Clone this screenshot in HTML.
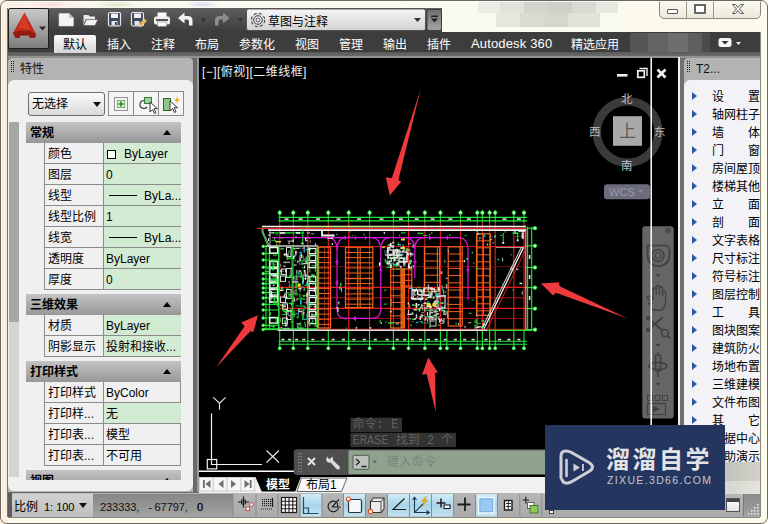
<!DOCTYPE html><html><head><meta charset="utf-8"><title>AutoCAD</title><style>
*{margin:0;padding:0;box-sizing:border-box}
html,body{width:768px;height:524px;overflow:hidden}
body{position:relative;background:#fbfbe8;font-family:"Liberation Sans","Noto Sans CJK SC",sans-serif;font-size:12px;color:#000;line-height:1}
.a{position:absolute}
.t{position:absolute;white-space:nowrap;line-height:14px;height:14px}
#qat{left:48px;top:8px;width:394px;height:25px;background:linear-gradient(#5e5e5e,#3a3a3a)}
#tabs{left:8px;top:32px;width:752px;height:21px;background:#3d3d3d}
#tabs .t{color:#fff;top:4px;font-size:12px}
#strip{left:8px;top:52px;width:752px;height:6px;background:linear-gradient(#5a5a5a 0,#6a6a6a 66%,#929292 67%,#929292 100%)}
#appbtn{left:8px;top:8px;width:41px;height:41px;background:linear-gradient(#c9c9c9,#7d7d7d);border:1px solid #1c1c1c;border-radius:2px}
#main{left:8px;top:58px;width:752px;height:435px;background:#6a6a6a}
#lp{left:8px;top:58px;width:185px;height:434px;background:#b3b3b3;border-radius:4px 4px 0 0}
#lpc{left:8px;top:80px;width:185px;height:411px;background:#f0f0f0;border-radius:6px;overflow:hidden}
#rp{left:684px;top:58px;width:76px;height:434px;background:#b3b3b3;border-radius:4px 0 0 0}
#rpc{left:684px;top:80px;width:76px;height:412px;background:#f3f3f7;border-radius:6px 0 0 6px;overflow:hidden}
#draw{left:199px;top:58px;width:480px;height:419px;background:#000;overflow:hidden}
.gh{position:absolute;left:18px;width:155px;height:21px;background:linear-gradient(#c4c4c4,#979797);font-weight:bold}
.gh .t{left:4px;top:4px}
.gh i{position:absolute;right:10px;top:8px;width:0;height:0;border-left:4px solid transparent;border-right:4px solid transparent;border-bottom:5px solid #000}
.row{position:absolute;left:36px;width:137px;height:21px;border-bottom:1px solid #8c8c8c;border-left:1px solid #8c8c8c;border-right:1px solid #8c8c8c;background:#f0f0f0}
.row .n{position:absolute;left:3px;top:4px;line-height:14px;white-space:nowrap}
.row .v{position:absolute;left:58px;top:0;width:78px;height:20px;border-left:1px solid #8c8c8c;padding:4px 0 0 2px;line-height:14px;white-space:nowrap;overflow:hidden}
.g .v{background:#d3ead3}
.ri{position:absolute;left:28px;white-space:nowrap;line-height:14px;font-size:12px}
.tri{position:absolute;left:8px;width:0;height:0;border-top:4.500px solid transparent;border-bottom:4.500px solid transparent;border-left:5.500px solid #2b5a9c}
#status{left:8px;top:493px;width:752px;height:24px;background:linear-gradient(#b6b6b6,#aaaaaa)}
</style></head><body>
<div class="a" style="left:0;top:0;width:768px;height:33px;background:linear-gradient(90deg,#fcefe2 0,#fdf0ea 6%,#f9faee 15%,#fcfbf3 30%,#fbfaf0 60%,#fbfaec 100%)"></div>
<div class="a" style="left:0;top:8px;width:8px;height:516px;background:#fdeedd"></div>
<div class="a" style="left:30px;top:1px;width:40px;height:7px;background:radial-gradient(closest-side,#f9dcd8,rgba(253,240,234,0))"></div>
<div class="a" style="left:95px;top:1px;width:44px;height:7px;background:radial-gradient(closest-side,#dbe6c8,rgba(250,250,240,0))"></div>
<div class="a" style="left:185px;top:1px;width:36px;height:7px;background:radial-gradient(closest-side,#d4dcf0,rgba(250,250,240,0))"></div>
<div class="a" style="left:478px;top:0px;width:22px;height:13px;background:#ecece4"></div>
<div class="a" style="left:500px;top:0px;width:24px;height:13px;background:#e2e2da"></div>
<div class="a" style="left:524px;top:0px;width:24px;height:13px;background:#d4d4cc"></div>
<div class="a" style="left:548px;top:0px;width:24px;height:13px;background:#d0d0c8"></div>
<div class="a" style="left:572px;top:0px;width:24px;height:13px;background:#dadad2"></div>
<div class="a" style="left:596px;top:0px;width:22px;height:13px;background:#e8e8e0"></div>
<div class="a" style="left:496px;top:13px;width:24px;height:14px;background:#e6e6de"></div>
<div class="a" style="left:520px;top:13px;width:24px;height:14px;background:#dadad2"></div>
<div class="a" style="left:544px;top:13px;width:24px;height:14px;background:#d6d6ce"></div>
<div class="a" style="left:568px;top:13px;width:32px;height:14px;background:#e2e2da"></div>
<div class="a" style="left:659px;top:-2px;width:102px;height:21px;border:1px solid #8a877c;border-radius:0 0 5px 5px;background:linear-gradient(#fdfcf4,#ece9da)"></div>
<div class="a" style="left:686px;top:0;width:1px;height:18px;background:#9a978c"></div>
<div class="a" style="left:713px;top:0;width:1px;height:18px;background:#9a978c"></div>
<div class="a" style="left:667px;top:9px;width:11px;height:5px;border:1px solid #555;border-radius:1px;background:#fff"></div>
<div class="a" style="left:694px;top:4px;width:12px;height:10px;border:2px solid #666;border-radius:1px;background:#fff"></div>
<svg class="a" style="left:731px;top:3px" width="14" height="12" viewBox="0 0 14 12"><path d="M1.5 1.5h3l2.5 3 2.5-3h3l-4 4.5 4 4.500h-3l-2.5-3-2.5 3h-3l4-4.500z" fill="#fff" stroke="#555" stroke-width="1"/></svg>
<div class="a" id="qat"></div>
<div class="a" id="tabs"></div>
<div class="a" id="strip"></div>
<div class="a" id="appbtn"></div>
<svg class="a" style="left:10px;top:10px" width="38" height="38" viewBox="0 0 38 38"><path d="M14.500 2.500 L3 23 L5.500 28 L9.500 28 L10 25.500 L19 25.500 L20 28 L25 28 L26 24 Z" fill="#c2281c"/><path d="M14.500 2.500 L8 18 L20 20 Z" fill="#e0402c" opacity=".7"/><path d="M3 23 L5.500 28 L9.500 28 L10 25.500 L19 25.500 L20 28 L25 28 L26 24 L20 21 L8 21 Z" fill="#7d120c" opacity=".65"/><path d="M29 16.500h7l-3.500 4z" fill="#2a2a2a"/></svg>
<svg class="a" style="left:48px;top:8px" width="394" height="25" viewBox="48 8 394 25"><path d="M59 13.500h10l4.500 4.500v8h-14.500z" fill="#f4f4f4" stroke="#d8d8d8" stroke-width=".6"/><path d="M69 13.500v4.500h4.500z" fill="#bdbdbd"/><path d="M83.500 15h5l1.500 1.500h5v3h-9.500l-2 5.500z" fill="#e8e8e8"/><path d="M86.500 19.500h11.500l-3 6h-11.500z" fill="#f2f2f2" stroke="#555" stroke-width=".6"/><rect x="108.500" y="12.500" width="12" height="13.500" rx="1.500" fill="#3e4858" stroke="#e4e8ee" stroke-width="1.200"/><rect x="111" y="13.500" width="7" height="4.500" fill="#eef2f6"/><rect x="111.500" y="21" width="6" height="4.500" fill="#dfe6ee"/><rect x="115" y="22" width="1.800" height="3" fill="#445"/><rect x="131.500" y="12.500" width="12" height="13.500" rx="1.500" fill="#3e4858" stroke="#e4e8ee" stroke-width="1.200"/><rect x="134" y="13.500" width="7" height="4.500" fill="#eef2f6"/><rect x="134.500" y="21" width="5" height="4.500" fill="#dfe6ee"/><path d="M139 26.500l1-3 4.500-4.500 2 2-4.500 4.500z" fill="#f0b030" stroke="#fff" stroke-width=".5"/><rect x="157.500" y="12.500" width="9" height="5" fill="#fafafa"/><rect x="154" y="16.500" width="16" height="8" rx="2" fill="#f0f0f0"/><rect x="156" y="19" width="12" height="2" fill="#555"/><rect x="157.500" y="22" width="9" height="4.500" fill="#fafafa" stroke="#777" stroke-width=".5"/><path d="M178 18l6.500-5.500v3.500h3.500q4.500 0 4.500 4.500v5h-3.500v-4q0-2-2-2h-2.500v4z" fill="#f2f2f2"/><path d="M201 18.500h5l-2.500 3z" fill="#2a2a2a"/><path d="M229.500 18l-6.500-5.500v3.500h-3.500q-4.500 0-4.500 4.500v5h3.500v-4q0-2 2-2h2.500v4z" fill="#8c8c8c"/><path d="M238 18.500h5l-2.500 3z" fill="#2a2a2a"/><defs><linearGradient id="wsg" x1="0" y1="0" x2="0" y2="1"><stop offset="0" stop-color="#f6f6f6"/><stop offset="1" stop-color="#d2d2d2"/></linearGradient><linearGradient id="wsg2" x1="0" y1="0" x2="0" y2="1"><stop offset="0" stop-color="#6e6e6e"/><stop offset="1" stop-color="#a4a4a4"/></linearGradient></defs><rect x="246.500" y="9" width="179" height="21.500" rx="2" fill="url(#wsg)" stroke="#444" stroke-width=".8"/><circle cx="258" cy="20" r="5.600" fill="none" stroke="#4a4a4a" stroke-width="3.400" stroke-dasharray="2.500 1.900"/><circle cx="258" cy="20" r="5.300" fill="none" stroke="#f4f4f4" stroke-width="1.600" stroke-dasharray="2.100 2.060" stroke-dashoffset="-.2"/><circle cx="258" cy="20" r="4.200" fill="#f0f0f0" stroke="#4a4a4a" stroke-width="1"/><circle cx="258" cy="20" r="2" fill="#e8e8e8" stroke="#4a4a4a" stroke-width=".9"/><path d="M414 18h7l-3.500 4z" fill="#333"/><rect x="427" y="9.500" width="14.500" height="21" rx="2" fill="url(#wsg2)" stroke="#333" stroke-width=".8"/><rect x="431" y="15.500" width="7" height="1.500" fill="#222"/><path d="M431 18.500h7l-3.500 4z" fill="#222"/></svg>
<div class="t" style="left:268px;top:14.500px;font-size:12px">草图与注释</div>
<div class="a" style="left:54px;top:35px;width:42px;height:18px;background:linear-gradient(#fafafa,#d6d6d6);border-radius:2px 2px 0 0"></div>
<div class="t" style="left:63px;top:37.500px;color:#000">默认</div>
<div class="t" style="left:107px;top:37.500px;color:#fff">插入</div>
<div class="t" style="left:151px;top:37.500px;color:#fff">注释</div>
<div class="t" style="left:195px;top:37.500px;color:#fff">布局</div>
<div class="t" style="left:239px;top:37.500px;color:#fff">参数化</div>
<div class="t" style="left:295px;top:37.500px;color:#fff">视图</div>
<div class="t" style="left:339px;top:37.500px;color:#fff">管理</div>
<div class="t" style="left:383px;top:37.500px;color:#fff">输出</div>
<div class="t" style="left:427px;top:37.500px;color:#fff">插件</div>
<div class="t" style="left:571px;top:37.500px;color:#fff">精选应用</div>
<div class="t" style="left:471px;top:37px;color:#fff;font-size:13px;letter-spacing:.15px">Autodesk 360</div>
<div class="a" style="left:630px;top:33px;width:18px;height:19px;background:#555"></div>
<div class="a" style="left:648px;top:33px;width:20px;height:19px;background:#636363"></div>
<div class="a" style="left:668px;top:33px;width:20px;height:19px;background:#6e6e6e"></div>
<div class="a" style="left:688px;top:33px;width:14px;height:19px;background:#5e5e5e"></div>
<div class="a" style="left:702px;top:33px;width:8px;height:19px;background:#4c4c4c"></div>
<svg class="a" style="left:716px;top:36px" width="30" height="14" viewBox="0 0 30 14"><rect x="2.500" y="2" width="13" height="9" rx="2.500" fill="#f4f4f4"/><path d="M5.500 5h7l-3.500 3.500z" fill="#333"/><path d="M20 6h5l-2.500 3z" fill="#eee"/></svg>
<div class="a" id="main"></div>
<div class="a" id="lp"></div>
<svg class="a" style="left:10px;top:61px" width="6" height="12" viewBox="0 0 6 12"><rect x="1" y="0" width="1" height="1" fill="#222"/><rect x="1" y="2" width="1" height="1" fill="#222"/><rect x="1" y="4" width="1" height="1" fill="#222"/><rect x="1" y="6" width="1" height="1" fill="#222"/><rect x="1" y="8" width="1" height="1" fill="#222"/><rect x="1" y="10" width="1" height="1" fill="#222"/><rect x="3" y="0" width="1" height="1" fill="#222"/><rect x="3" y="2" width="1" height="1" fill="#222"/><rect x="3" y="4" width="1" height="1" fill="#222"/><rect x="3" y="6" width="1" height="1" fill="#222"/><rect x="3" y="8" width="1" height="1" fill="#222"/><rect x="3" y="10" width="1" height="1" fill="#222"/></svg>
<div class="t" style="left:20px;top:62px;color:#111">特性</div>
<div class="a" id="lpc">
<div class="a" style="left:1px;top:42px;width:9.500px;height:355px;background:#d4d4d4"></div>
<div class="a" style="left:1px;top:42px;width:9.500px;height:200px;background:#a6a6a6"></div>
<div class="a" style="left:20px;top:12px;width:77px;height:24px;border:1px solid #6e6e6e;border-radius:3px;background:linear-gradient(#fbfbfb,#d9d9d9)"></div>
<div class="t" style="left:24px;top:17px">无选择</div>
<div class="a" style="left:85px;top:22px;width:0;height:0;border-left:4px solid transparent;border-right:4px solid transparent;border-top:5px solid #111"></div>
<div class="a" style="left:100px;top:11px;width:76px;height:25px;border:1px solid #8a8a8a;background:#f4f4f4"></div>
<div class="a" style="left:125px;top:12px;width:1px;height:23px;background:#8a8a8a"></div>
<div class="a" style="left:150px;top:12px;width:1px;height:23px;background:#8a8a8a"></div>
<svg class="a" style="left:100px;top:11px" width="76" height="25" viewBox="0 0 76 25"><rect x="6.500" y="6.500" width="13" height="13" fill="none" stroke="#333" stroke-width="1" stroke-dasharray="1 1"/><rect x="9.500" y="9.500" width="7" height="7" fill="#d8f0d0" stroke="#7a7"/><path d="M13 10.500v5M10.500 13h5" stroke="#1a8a1a" stroke-width="1.600"/><path d="M36 9.500a4 4 0 1 0 3 6.500" fill="none" stroke="#333" stroke-width="1.200"/><rect x="36.500" y="6.500" width="7" height="6" fill="#9ccf9c" stroke="#3a7a3a"/><path d="M42 11v10l2.500-2.500 2 4 1.500-.8-2-4h3.500z" fill="#fff" stroke="#222" stroke-width=".9"/><rect x="55.500" y="7.500" width="7" height="12" fill="#8cc68c" stroke="#2a6a2a"/><path d="M62 10v10l2.500-2.500 2 4 1.500-.8-2-4h3.500z" fill="#fff" stroke="#222" stroke-width=".9"/><path d="M70 5l-3.500 5h2.500l-2 4 5-6h-2.500z" fill="#f2b020"/></svg>
<div class="gh" style="top:42px"><div class="t">常规</div><i></i></div>
<div class="row g" style="top:63px"><div class="n">颜色</div><div class="v"><span style="display:inline-block;width:9px;height:9px;border:1px solid #000;background:#fff;vertical-align:-1px;margin:0 8px 0 1px"></span>ByLayer</div></div>
<div class="row g" style="top:84px"><div class="n">图层</div><div class="v">0</div></div>
<div class="row g" style="top:105px"><div class="n">线型</div><div class="v"><span style="display:inline-block;width:28px;height:1px;background:#000;vertical-align:4px;margin:0 7px 0 3px"></span>ByLa...</div></div>
<div class="row g" style="top:126px"><div class="n">线型比例</div><div class="v">1</div></div>
<div class="row g" style="top:147px"><div class="n">线宽</div><div class="v"><span style="display:inline-block;width:28px;height:1px;background:#000;vertical-align:4px;margin:0 7px 0 3px"></span>ByLa...</div></div>
<div class="row g" style="top:168px"><div class="n">透明度</div><div class="v">ByLayer</div></div>
<div class="row g" style="top:189px"><div class="n">厚度</div><div class="v">0</div></div>
<div class="gh" style="top:214px"><div class="t">三维效果</div><i></i></div>
<div class="row g" style="top:235px"><div class="n">材质</div><div class="v">ByLayer</div></div>
<div class="row g" style="top:256px"><div class="n">阴影显示</div><div class="v">投射和接收...</div></div>
<div class="gh" style="top:281px"><div class="t">打印样式</div><i></i></div>
<div class="row" style="top:302px"><div class="n">打印样式</div><div class="v">ByColor</div></div>
<div class="row g" style="top:323px"><div class="n">打印样...</div><div class="v">无</div></div>
<div class="row" style="top:344px"><div class="n">打印表...</div><div class="v">模型</div></div>
<div class="row" style="top:365px"><div class="n">打印表...</div><div class="v">不可用</div></div>
<div class="a" style="left:18px;top:390px;width:155px;height:10px;overflow:hidden"><div class="gh" style="left:0;top:0"><div class="t">视图</div><i></i></div></div>
</div>
<div class="a" id="rp"></div>
<svg class="a" style="left:686px;top:61px" width="6" height="12" viewBox="0 0 6 12"><rect x="1" y="0" width="1" height="1" fill="#222"/><rect x="1" y="2" width="1" height="1" fill="#222"/><rect x="1" y="4" width="1" height="1" fill="#222"/><rect x="1" y="6" width="1" height="1" fill="#222"/><rect x="1" y="8" width="1" height="1" fill="#222"/><rect x="1" y="10" width="1" height="1" fill="#222"/><rect x="3" y="0" width="1" height="1" fill="#222"/><rect x="3" y="2" width="1" height="1" fill="#222"/><rect x="3" y="4" width="1" height="1" fill="#222"/><rect x="3" y="6" width="1" height="1" fill="#222"/><rect x="3" y="8" width="1" height="1" fill="#222"/><rect x="3" y="10" width="1" height="1" fill="#222"/></svg>
<div class="t" style="left:696px;top:62px;color:#111">T2...</div>
<div class="a" id="rpc">
<div class="tri" style="top:12px"></div><div class="ri" style="top:10px">设　　置</div>
<div class="tri" style="top:30px"></div><div class="ri" style="top:28px">轴网柱子</div>
<div class="tri" style="top:48px"></div><div class="ri" style="top:46px">墙　　体</div>
<div class="tri" style="top:66px"></div><div class="ri" style="top:64px">门　　窗</div>
<div class="tri" style="top:84px"></div><div class="ri" style="top:82px">房间屋顶</div>
<div class="tri" style="top:102px"></div><div class="ri" style="top:100px">楼梯其他</div>
<div class="tri" style="top:120px"></div><div class="ri" style="top:118px">立　　面</div>
<div class="tri" style="top:138px"></div><div class="ri" style="top:136px">剖　　面</div>
<div class="tri" style="top:156px"></div><div class="ri" style="top:154px">文字表格</div>
<div class="tri" style="top:174px"></div><div class="ri" style="top:172px">尺寸标注</div>
<div class="tri" style="top:192px"></div><div class="ri" style="top:190px">符号标注</div>
<div class="tri" style="top:210px"></div><div class="ri" style="top:208px">图层控制</div>
<div class="tri" style="top:228px"></div><div class="ri" style="top:226px">工　　具</div>
<div class="tri" style="top:246px"></div><div class="ri" style="top:244px">图块图案</div>
<div class="tri" style="top:264px"></div><div class="ri" style="top:262px">建筑防火</div>
<div class="tri" style="top:282px"></div><div class="ri" style="top:280px">场地布置</div>
<div class="tri" style="top:300px"></div><div class="ri" style="top:298px">三维建模</div>
<div class="tri" style="top:318px"></div><div class="ri" style="top:316px">文件布图</div>
<div class="tri" style="top:336px"></div><div class="ri" style="top:334px">其　　它</div>
<div class="tri" style="top:354px"></div><div class="ri" style="top:352px">数据中心</div>
<div class="tri" style="top:372px"></div><div class="ri" style="top:370px">帮助演示</div>
</div>
<div class="a" id="status"></div>
<div class="a" style="left:8px;top:493px;width:4px;height:24px;background:#5c5c5c"></div>
<div class="a" style="left:12px;top:494px;width:81px;height:22.500px;background:linear-gradient(#d2d2d2,#bdbdbd)"></div>
<div class="t" style="left:14px;top:499.500px">比例</div>
<div class="a" style="left:93px;top:494px;width:140px;height:23px;background:linear-gradient(#868686,#a4a4a4)"></div>
<div class="t" style="left:44px;top:500px;font-size:11px;letter-spacing:-.06px">1<span style="letter-spacing:3px">:</span>100</div>
<div class="a" style="left:79px;top:503px;width:0;height:0;border-left:4px solid transparent;border-right:4px solid transparent;border-top:5px solid #111"></div>
<div class="t" style="left:100px;top:500px;font-size:11px;letter-spacing:-.06px;color:#111">233333<span style="letter-spacing:3px">, </span><span style="letter-spacing:2.400px">-</span>67797<span style="letter-spacing:3px">, </span>0</div>
<div class="a" style="left:197px;top:58px;width:2px;height:434px;background:#9a9a9a"></div>
<div class="a" id="draw"></div>
<div class="a" style="left:678px;top:57px;width:2px;height:421px;background:#f2f2f2"></div>
<div class="a" style="left:680px;top:58px;width:4px;height:434px;background:#707070"></div>
<svg class="a" style="left:199px;top:58px" width="480" height="419" viewBox="199 58 480 419" fill="none"><path d="M279.7 210L279.7 222.5" stroke="#22e83a" stroke-width="1.1"/><circle cx="279.7" cy="212.7" r="1.7" fill="#d8ffd8" stroke="#22e83a" stroke-width="1"/><path d="M293.3 210L293.3 222.5" stroke="#22e83a" stroke-width="1.1"/><circle cx="293.3" cy="212.7" r="1.7" fill="#d8ffd8" stroke="#22e83a" stroke-width="1"/><path d="M307.8 210L307.8 222.5" stroke="#22e83a" stroke-width="1.1"/><circle cx="307.8" cy="212.7" r="1.7" fill="#d8ffd8" stroke="#22e83a" stroke-width="1"/><path d="M328.3 210L328.3 222.5" stroke="#22e83a" stroke-width="1.1"/><circle cx="328.3" cy="212.7" r="1.7" fill="#d8ffd8" stroke="#22e83a" stroke-width="1"/><path d="M348.7 210L348.7 222.5" stroke="#22e83a" stroke-width="1.1"/><circle cx="348.7" cy="212.7" r="1.7" fill="#d8ffd8" stroke="#22e83a" stroke-width="1"/><path d="M369.6 210L369.6 222.5" stroke="#22e83a" stroke-width="1.1"/><circle cx="369.6" cy="212.7" r="1.7" fill="#d8ffd8" stroke="#22e83a" stroke-width="1"/><path d="M393.4 210L393.4 222.5" stroke="#22e83a" stroke-width="1.1"/><circle cx="393.4" cy="212.7" r="1.7" fill="#d8ffd8" stroke="#22e83a" stroke-width="1"/><path d="M408.5 210L408.5 222.5" stroke="#22e83a" stroke-width="1.1"/><circle cx="408.5" cy="212.7" r="1.7" fill="#d8ffd8" stroke="#22e83a" stroke-width="1"/><path d="M424.9 210L424.9 222.5" stroke="#22e83a" stroke-width="1.1"/><circle cx="424.9" cy="212.7" r="1.7" fill="#d8ffd8" stroke="#22e83a" stroke-width="1"/><path d="M440.4 210L440.4 222.5" stroke="#22e83a" stroke-width="1.1"/><circle cx="440.4" cy="212.7" r="1.7" fill="#d8ffd8" stroke="#22e83a" stroke-width="1"/><path d="M460.5 210L460.5 222.5" stroke="#22e83a" stroke-width="1.1"/><circle cx="460.5" cy="212.7" r="1.7" fill="#d8ffd8" stroke="#22e83a" stroke-width="1"/><path d="M477.3 210L477.3 222.5" stroke="#22e83a" stroke-width="1.1"/><circle cx="477.3" cy="212.7" r="1.7" fill="#d8ffd8" stroke="#22e83a" stroke-width="1"/><path d="M482.4 210L482.4 222.5" stroke="#22e83a" stroke-width="1.1"/><circle cx="482.4" cy="212.7" r="1.7" fill="#d8ffd8" stroke="#22e83a" stroke-width="1"/><path d="M489.6 210L489.6 222.5" stroke="#22e83a" stroke-width="1.1"/><circle cx="489.6" cy="212.7" r="1.7" fill="#d8ffd8" stroke="#22e83a" stroke-width="1"/><path d="M495.2 210L495.2 222.5" stroke="#22e83a" stroke-width="1.1"/><circle cx="495.2" cy="212.7" r="1.7" fill="#d8ffd8" stroke="#22e83a" stroke-width="1"/><path d="M513.8 210L513.8 222.5" stroke="#22e83a" stroke-width="1.1"/><circle cx="513.8" cy="212.7" r="1.7" fill="#d8ffd8" stroke="#22e83a" stroke-width="1"/><path d="M524 210L524 222.5" stroke="#22e83a" stroke-width="1.1"/><circle cx="524" cy="212.7" r="1.7" fill="#d8ffd8" stroke="#22e83a" stroke-width="1"/><path d="M278.5 217.4L527 217.4" stroke="#22e83a" stroke-width="1.1"/><path d="M278.5 220.9L527 220.9" stroke="#22e83a" stroke-width="1.1"/><rect x="284.5" y="218.3" width="4" height="1.6" fill="#f4f4f4" opacity="0.9"/><rect x="298.6" y="218.3" width="4" height="1.6" fill="#f4f4f4" opacity="0.9"/><rect x="316.1" y="218.3" width="4" height="1.6" fill="#f4f4f4" opacity="0.9"/><rect x="336.5" y="218.3" width="4" height="1.6" fill="#f4f4f4" opacity="0.9"/><rect x="357.1" y="218.3" width="4" height="1.6" fill="#f4f4f4" opacity="0.9"/><rect x="379.5" y="218.3" width="4" height="1.6" fill="#f4f4f4" opacity="0.9"/><rect x="398.9" y="218.3" width="4" height="1.6" fill="#f4f4f4" opacity="0.9"/><rect x="414.7" y="218.3" width="4" height="1.6" fill="#f4f4f4" opacity="0.9"/><rect x="430.6" y="218.3" width="4" height="1.6" fill="#f4f4f4" opacity="0.9"/><rect x="448.4" y="218.3" width="4" height="1.6" fill="#f4f4f4" opacity="0.9"/><rect x="466.9" y="218.3" width="4" height="1.6" fill="#f4f4f4" opacity="0.9"/><rect x="502.5" y="218.3" width="4" height="1.6" fill="#f4f4f4" opacity="0.9"/><rect x="516.9" y="218.3" width="4" height="1.6" fill="#f4f4f4" opacity="0.9"/><path d="M279.7 331L279.7 349.5" stroke="#22e83a" stroke-width="1.1"/><path d="M293.3 331L293.3 349.5" stroke="#22e83a" stroke-width="1.1"/><path d="M307.8 331L307.8 349.5" stroke="#22e83a" stroke-width="1.1"/><path d="M328.3 331L328.3 349.5" stroke="#22e83a" stroke-width="1.1"/><path d="M348.7 331L348.7 349.5" stroke="#22e83a" stroke-width="1.1"/><path d="M369.6 331L369.6 349.5" stroke="#22e83a" stroke-width="1.1"/><path d="M393.4 331L393.4 349.5" stroke="#22e83a" stroke-width="1.1"/><path d="M408.5 331L408.5 349.5" stroke="#22e83a" stroke-width="1.1"/><path d="M424.9 331L424.9 349.5" stroke="#22e83a" stroke-width="1.1"/><path d="M440.4 331L440.4 349.5" stroke="#22e83a" stroke-width="1.1"/><path d="M460.5 331L460.5 349.5" stroke="#22e83a" stroke-width="1.1"/><path d="M477.3 331L477.3 349.5" stroke="#22e83a" stroke-width="1.1"/><path d="M482.4 331L482.4 349.5" stroke="#22e83a" stroke-width="1.1"/><path d="M489.6 331L489.6 349.5" stroke="#22e83a" stroke-width="1.1"/><path d="M495.2 331L495.2 349.5" stroke="#22e83a" stroke-width="1.1"/><path d="M513.8 331L513.8 349.5" stroke="#22e83a" stroke-width="1.1"/><path d="M524 331L524 349.5" stroke="#22e83a" stroke-width="1.1"/><path d="M446.9 331L446.9 349.5" stroke="#22e83a" stroke-width="1.1"/><circle cx="446.9" cy="348.3" r="1.5" fill="#d8ffd8" stroke="#22e83a" stroke-width="1"/><circle cx="279.7" cy="348.3" r="1.5" fill="#d8ffd8" stroke="#22e83a" stroke-width="1"/><circle cx="293.3" cy="348.3" r="1.5" fill="#d8ffd8" stroke="#22e83a" stroke-width="1"/><circle cx="307.8" cy="348.3" r="1.5" fill="#d8ffd8" stroke="#22e83a" stroke-width="1"/><circle cx="328.3" cy="348.3" r="1.5" fill="#d8ffd8" stroke="#22e83a" stroke-width="1"/><circle cx="348.7" cy="348.3" r="1.5" fill="#d8ffd8" stroke="#22e83a" stroke-width="1"/><circle cx="369.6" cy="348.3" r="1.5" fill="#d8ffd8" stroke="#22e83a" stroke-width="1"/><circle cx="393.4" cy="348.3" r="1.5" fill="#d8ffd8" stroke="#22e83a" stroke-width="1"/><circle cx="408.5" cy="348.3" r="1.5" fill="#d8ffd8" stroke="#22e83a" stroke-width="1"/><circle cx="424.9" cy="348.3" r="1.5" fill="#d8ffd8" stroke="#22e83a" stroke-width="1"/><circle cx="440.4" cy="348.3" r="1.5" fill="#d8ffd8" stroke="#22e83a" stroke-width="1"/><circle cx="460.5" cy="348.3" r="1.5" fill="#d8ffd8" stroke="#22e83a" stroke-width="1"/><circle cx="477.3" cy="348.3" r="1.5" fill="#d8ffd8" stroke="#22e83a" stroke-width="1"/><circle cx="482.4" cy="348.3" r="1.5" fill="#d8ffd8" stroke="#22e83a" stroke-width="1"/><circle cx="489.6" cy="348.3" r="1.5" fill="#d8ffd8" stroke="#22e83a" stroke-width="1"/><circle cx="495.2" cy="348.3" r="1.5" fill="#d8ffd8" stroke="#22e83a" stroke-width="1"/><circle cx="513.8" cy="348.3" r="1.5" fill="#d8ffd8" stroke="#22e83a" stroke-width="1"/><circle cx="524" cy="348.3" r="1.5" fill="#d8ffd8" stroke="#22e83a" stroke-width="1"/><path d="M278.5 341.3L527 341.3" stroke="#22e83a" stroke-width="1.1"/><path d="M278.5 344.3L527 344.3" stroke="#22e83a" stroke-width="1.1"/><rect x="281.4" y="338.8" width="3" height="1.6" fill="#f4f4f4" opacity="0.9"/><rect x="288.1" y="338.8" width="3" height="1.6" fill="#f4f4f4" opacity="0.9"/><rect x="295.1" y="338.8" width="3" height="1.6" fill="#f4f4f4" opacity="0.9"/><rect x="302.4" y="338.8" width="3" height="1.6" fill="#f4f4f4" opacity="0.9"/><rect x="311.4" y="338.8" width="3" height="1.6" fill="#f4f4f4" opacity="0.9"/><rect x="321.6" y="338.8" width="3" height="1.6" fill="#f4f4f4" opacity="0.9"/><rect x="331.6" y="338.8" width="3" height="1.6" fill="#f4f4f4" opacity="0.9"/><rect x="341.9" y="338.8" width="3" height="1.6" fill="#f4f4f4" opacity="0.9"/><rect x="352.4" y="338.8" width="3" height="1.6" fill="#f4f4f4" opacity="0.9"/><rect x="362.8" y="338.8" width="3" height="1.6" fill="#f4f4f4" opacity="0.9"/><rect x="373.8" y="338.8" width="3" height="1.6" fill="#f4f4f4" opacity="0.9"/><rect x="385.7" y="338.8" width="3" height="1.6" fill="#f4f4f4" opacity="0.9"/><rect x="395.7" y="338.8" width="3" height="1.6" fill="#f4f4f4" opacity="0.9"/><rect x="403.2" y="338.8" width="3" height="1.6" fill="#f4f4f4" opacity="0.9"/><rect x="410.8" y="338.8" width="3" height="1.6" fill="#f4f4f4" opacity="0.9"/><rect x="418.9" y="338.8" width="3" height="1.6" fill="#f4f4f4" opacity="0.9"/><rect x="426.9" y="338.8" width="3" height="1.6" fill="#f4f4f4" opacity="0.9"/><rect x="434.7" y="338.8" width="3" height="1.6" fill="#f4f4f4" opacity="0.9"/><rect x="443.7" y="338.8" width="3" height="1.6" fill="#f4f4f4" opacity="0.9"/><rect x="453.8" y="338.8" width="3" height="1.6" fill="#f4f4f4" opacity="0.9"/><rect x="463.2" y="338.8" width="3" height="1.6" fill="#f4f4f4" opacity="0.9"/><rect x="471.6" y="338.8" width="3" height="1.6" fill="#f4f4f4" opacity="0.9"/><rect x="484.5" y="338.8" width="3" height="1.6" fill="#f4f4f4" opacity="0.9"/><rect x="498.1" y="338.8" width="3" height="1.6" fill="#f4f4f4" opacity="0.9"/><rect x="507.4" y="338.8" width="3" height="1.6" fill="#f4f4f4" opacity="0.9"/><rect x="517.4" y="338.8" width="3" height="1.6" fill="#f4f4f4" opacity="0.9"/><path d="M527.6 226.5L527.6 331" stroke="#22e83a" stroke-width="1.1"/><path d="M531.7 226.5L531.7 331" stroke="#22e83a" stroke-width="1.1"/><path d="M526 228.2L536 228.2" stroke="#22e83a" stroke-width="1.1"/><circle cx="535" cy="228.2" r="1.7" fill="#d8ffd8" stroke="#22e83a" stroke-width="1"/><path d="M526 245.8L536 245.8" stroke="#22e83a" stroke-width="1.1"/><circle cx="535" cy="245.8" r="1.7" fill="#d8ffd8" stroke="#22e83a" stroke-width="1"/><path d="M526 267.5L536 267.5" stroke="#22e83a" stroke-width="1.1"/><circle cx="535" cy="267.5" r="1.7" fill="#d8ffd8" stroke="#22e83a" stroke-width="1"/><path d="M526 287.6L536 287.6" stroke="#22e83a" stroke-width="1.1"/><circle cx="535" cy="287.6" r="1.7" fill="#d8ffd8" stroke="#22e83a" stroke-width="1"/><path d="M526 308.6L536 308.6" stroke="#22e83a" stroke-width="1.1"/><circle cx="535" cy="308.6" r="1.7" fill="#d8ffd8" stroke="#22e83a" stroke-width="1"/><path d="M526 329.6L536 329.6" stroke="#22e83a" stroke-width="1.1"/><circle cx="535" cy="329.6" r="1.7" fill="#d8ffd8" stroke="#22e83a" stroke-width="1"/><rect x="528.8" y="255" width="1.6" height="4" fill="#f4f4f4" opacity="0.9"/><rect x="528.8" y="275" width="1.6" height="4" fill="#f4f4f4" opacity="0.9"/><rect x="528.8" y="296" width="1.6" height="4" fill="#f4f4f4" opacity="0.9"/><path d="M266 245L266 329.5" stroke="#22e83a" stroke-width="1.1"/><path d="M269.4 245L269.4 329.5" stroke="#22e83a" stroke-width="1.1"/><path d="M262 246.4L279 246.4" stroke="#22e83a" stroke-width="1.1"/><circle cx="263.2" cy="246.4" r="1.3" fill="#d8ffd8" stroke="#22e83a" stroke-width="1"/><path d="M262 253.6L279 253.6" stroke="#22e83a" stroke-width="1.1"/><circle cx="263.2" cy="253.6" r="1.3" fill="#d8ffd8" stroke="#22e83a" stroke-width="1"/><path d="M262 260L279 260" stroke="#22e83a" stroke-width="1.1"/><circle cx="263.2" cy="260" r="1.3" fill="#d8ffd8" stroke="#22e83a" stroke-width="1"/><path d="M262 267.2L279 267.2" stroke="#22e83a" stroke-width="1.1"/><circle cx="263.2" cy="267.2" r="1.3" fill="#d8ffd8" stroke="#22e83a" stroke-width="1"/><path d="M262 273.6L279 273.6" stroke="#22e83a" stroke-width="1.1"/><circle cx="263.2" cy="273.6" r="1.3" fill="#d8ffd8" stroke="#22e83a" stroke-width="1"/><path d="M262 279L279 279" stroke="#22e83a" stroke-width="1.1"/><circle cx="263.2" cy="279" r="1.3" fill="#d8ffd8" stroke="#22e83a" stroke-width="1"/><path d="M262 283.6L279 283.6" stroke="#22e83a" stroke-width="1.1"/><circle cx="263.2" cy="283.6" r="1.3" fill="#d8ffd8" stroke="#22e83a" stroke-width="1"/><path d="M262 288L279 288" stroke="#22e83a" stroke-width="1.1"/><circle cx="263.2" cy="288" r="1.3" fill="#d8ffd8" stroke="#22e83a" stroke-width="1"/><path d="M262 292.6L279 292.6" stroke="#22e83a" stroke-width="1.1"/><circle cx="263.2" cy="292.6" r="1.3" fill="#d8ffd8" stroke="#22e83a" stroke-width="1"/><path d="M262 298L279 298" stroke="#22e83a" stroke-width="1.1"/><circle cx="263.2" cy="298" r="1.3" fill="#d8ffd8" stroke="#22e83a" stroke-width="1"/><path d="M262 304.4L279 304.4" stroke="#22e83a" stroke-width="1.1"/><circle cx="263.2" cy="304.4" r="1.3" fill="#d8ffd8" stroke="#22e83a" stroke-width="1"/><path d="M262 310L279 310" stroke="#22e83a" stroke-width="1.1"/><circle cx="263.2" cy="310" r="1.3" fill="#d8ffd8" stroke="#22e83a" stroke-width="1"/><path d="M262 318L279 318" stroke="#22e83a" stroke-width="1.1"/><circle cx="263.2" cy="318" r="1.3" fill="#d8ffd8" stroke="#22e83a" stroke-width="1"/><path d="M262 325.3L279 325.3" stroke="#22e83a" stroke-width="1.1"/><circle cx="263.2" cy="325.3" r="1.3" fill="#d8ffd8" stroke="#22e83a" stroke-width="1"/><path d="M262 329.6L279 329.6" stroke="#22e83a" stroke-width="1.1"/><circle cx="263.2" cy="329.6" r="1.3" fill="#d8ffd8" stroke="#22e83a" stroke-width="1"/><path d="M279.7 222.5L279.7 331" stroke="#e81c1c" stroke-width="1.1"/><path d="M293.3 222.5L293.3 331" stroke="#e81c1c" stroke-width="1.1"/><path d="M307.8 222.5L307.8 331" stroke="#e81c1c" stroke-width="1.1"/><path d="M328.3 222.5L328.3 331" stroke="#e81c1c" stroke-width="1.1"/><path d="M348.7 222.5L348.7 331" stroke="#e81c1c" stroke-width="1.1"/><path d="M369.6 222.5L369.6 331" stroke="#e81c1c" stroke-width="1.1"/><path d="M393.4 222.5L393.4 331" stroke="#e81c1c" stroke-width="1.1"/><path d="M408.5 222.5L408.5 331" stroke="#e81c1c" stroke-width="1.1"/><path d="M424.9 222.5L424.9 331" stroke="#e81c1c" stroke-width="1.1"/><path d="M440.4 222.5L440.4 331" stroke="#e81c1c" stroke-width="1.1"/><path d="M460.5 222.5L460.5 331" stroke="#e81c1c" stroke-width="1.1"/><path d="M477.3 222.5L477.3 331" stroke="#e81c1c" stroke-width="1.1"/><path d="M482.4 222.5L482.4 331" stroke="#e81c1c" stroke-width="1.1"/><path d="M489.6 222.5L489.6 331" stroke="#e81c1c" stroke-width="1.1"/><path d="M495.2 222.5L495.2 331" stroke="#e81c1c" stroke-width="1.1"/><path d="M513.8 222.5L513.8 331" stroke="#e81c1c" stroke-width="1.1"/><path d="M524 222.5L524 331" stroke="#e81c1c" stroke-width="1.1"/><path d="M257 228.4L526 228.4" stroke="#e81c1c" stroke-width="1.2"/><path d="M318 246.6L526 246.6" stroke="#e81c1c" stroke-width="1"/><path d="M278 287.3L526 287.3" stroke="#e81c1c" stroke-width="1.2"/><path d="M318 297.8L526 297.8" stroke="#b01414" stroke-width="1"/><path d="M278 308.3L526 308.3" stroke="#e81c1c" stroke-width="1.2"/><path d="M318 318.5L526 318.5" stroke="#a01010" stroke-width="0.9"/><path d="M318 329.3L526 329.3" stroke="#e81c1c" stroke-width="1"/><path d="M318 266.6L526 266.6" stroke="#8c1010" stroke-width="0.8"/><path d="M262 226.5L526 226.5" stroke="#f4f4f4" stroke-width="1.5"/><path d="M300 226.6L400 226.6" stroke="#a0f040" stroke-width="1.2" opacity="0.7"/><path d="M268 230.100H526M322 230.100V235.500H334.500" stroke="#f4f4f4" stroke-width="1.800"/><path d="M262 228v4l6 14" stroke="#22e83a" stroke-width="1"/><path d="M263 229v3l7 15v-17" stroke="#f4f4f4" stroke-width=".9" opacity=".8"/><path d="M525.8 229L525.8 331" stroke="#f0d0a0" stroke-width="1.2" opacity="0.85"/><path d="M263 329L318 329" stroke="#22e83a" stroke-width="1.6"/><path d="M277.5 330.2L487 330.2" stroke="#e0e0e0" stroke-width="1.6"/><path d="M487 330.4L531 330.4" stroke="#22e83a" stroke-width="1.3"/><path d="M272.3 232.9L304 232.9" stroke="#22e83a" stroke-width="1.1"/><rect x="280" y="232.2" width="5" height="1.5" fill="#f4f4f4"/><rect x="296" y="232.2" width="4" height="1.5" fill="#f4f4f4"/><path d="M302.8 230L302.8 245" stroke="#22e83a" stroke-width="1"/><path d="M266 246L318 246" stroke="#c8c8c8" stroke-width="1.4"/><path d="M272 237.7L458 237.7" stroke="#d418d4" stroke-width="1.2"/><path d="M328 237.700Q337 238 337 250V309.4Q337 318.4 346 318.4H371.7Q380.7 318.4 380.7 309.4V250Q380.7 238 389.7 237.700" stroke="#d418d4" stroke-width="1.200"/><path d="M346 237.700Q337 238 337 250M371.7 237.700Q380.7 238 380.7 250" stroke="#d418d4" stroke-width="1.100"/><path d="M405.500 237.700Q414.800 238 414.800 250V278M424 237.700Q414.800 238 414.800 250" stroke="#d418d4" stroke-width="1.200"/><path d="M458 237.700Q468 238 468 250V300" stroke="#d418d4" stroke-width="1.200"/><path d="M335 262h4M337 259v6" stroke="#d418d4" stroke-width="1"/><path d="M335 283h4M337 280v6" stroke="#d418d4" stroke-width="1"/><path d="M378.7 270h4M380.7 267v6" stroke="#d418d4" stroke-width="1"/><path d="M412.8 262h4M414.8 259v6" stroke="#d418d4" stroke-width="1"/><path d="M466 270h4M468 267v6" stroke="#d418d4" stroke-width="1"/><path d="M352 318.400l4-2.500v5zM343 237.700l3-2.500v5zM445 237.700l3-2.500v5zM432 237.700l-3-2.500v5z" fill="#d418d4"/><path d="M356 235.500a3 3 0 0 0 0 4.500M365 235.500a3 3 0 0 1 0 4.500" stroke="#d418d4" stroke-width="1"/><rect x="318.6" y="247.2" width="12" height="80.8" fill="none" stroke="#f06418" stroke-width="1.2"/><path d="M318.6 252.3L330.6 252.3" stroke="#f06418" stroke-width="1"/><path d="M318.6 257.5L330.6 257.5" stroke="#f06418" stroke-width="1"/><path d="M318.6 262.6L330.6 262.6" stroke="#f06418" stroke-width="1"/><path d="M318.6 267.8L330.6 267.8" stroke="#f06418" stroke-width="1"/><path d="M318.6 272.9L330.6 272.9" stroke="#f06418" stroke-width="1"/><path d="M318.6 278.1L330.6 278.1" stroke="#f06418" stroke-width="1"/><path d="M318.6 283.2L330.6 283.2" stroke="#f06418" stroke-width="1"/><path d="M318.6 288.4L330.6 288.4" stroke="#f06418" stroke-width="1"/><path d="M318.6 293.5L330.6 293.5" stroke="#f06418" stroke-width="1"/><path d="M318.6 298.7L330.6 298.7" stroke="#f06418" stroke-width="1"/><path d="M318.6 303.8L330.6 303.8" stroke="#f06418" stroke-width="1"/><path d="M318.6 309L330.6 309" stroke="#f06418" stroke-width="1"/><path d="M318.6 314.1L330.6 314.1" stroke="#f06418" stroke-width="1"/><path d="M318.6 319.3L330.6 319.3" stroke="#f06418" stroke-width="1"/><path d="M318.6 324.4L330.6 324.4" stroke="#f06418" stroke-width="1"/><path d="M324.5 247.2L324.5 328" stroke="#a8400c" stroke-width="0.8"/><rect x="345.5" y="247.3" width="27.3" height="31.2" fill="none" stroke="#f06418" stroke-width="1.2"/><path d="M345.5 252.5L372.8 252.5" stroke="#f06418" stroke-width="1"/><path d="M345.5 257.6L372.8 257.6" stroke="#f06418" stroke-width="1"/><path d="M345.5 262.8L372.8 262.8" stroke="#f06418" stroke-width="1"/><path d="M345.5 267.9L372.8 267.9" stroke="#f06418" stroke-width="1"/><path d="M345.5 273L372.8 273" stroke="#f06418" stroke-width="1"/><path d="M357.7 247.3L357.7 278.5" stroke="#f06418" stroke-width="1.1"/><path d="M360.2 247.3L360.2 278.5" stroke="#f06418" stroke-width="1.1"/><rect x="345.5" y="278.5" width="27.3" height="29.1" fill="none" stroke="#f06418" stroke-width="1.2"/><path d="M345.5 283.6L372.8 283.6" stroke="#f06418" stroke-width="1"/><path d="M345.5 288.8L372.8 288.8" stroke="#f06418" stroke-width="1"/><path d="M345.5 293.9L372.8 293.9" stroke="#f06418" stroke-width="1"/><path d="M345.5 299.1L372.8 299.1" stroke="#f06418" stroke-width="1"/><path d="M345.5 304.2L372.8 304.2" stroke="#f06418" stroke-width="1"/><path d="M357.7 278.5L357.7 307.6" stroke="#f06418" stroke-width="1.1"/><path d="M360.2 278.5L360.2 307.6" stroke="#f06418" stroke-width="1.1"/><rect x="390.7" y="269" width="13.7" height="59" fill="none" stroke="#f06418" stroke-width="1.2"/><path d="M390.7 275.7L404.4 275.7" stroke="#f06418" stroke-width="1"/><path d="M390.7 282.4L404.4 282.4" stroke="#f06418" stroke-width="1"/><path d="M390.7 289.1L404.4 289.1" stroke="#f06418" stroke-width="1"/><path d="M390.7 295.8L404.4 295.8" stroke="#f06418" stroke-width="1"/><path d="M390.7 302.5L404.4 302.5" stroke="#f06418" stroke-width="1"/><path d="M390.7 309.2L404.4 309.2" stroke="#f06418" stroke-width="1"/><path d="M390.7 315.9L404.4 315.9" stroke="#f06418" stroke-width="1"/><path d="M390.7 322.6L404.4 322.6" stroke="#f06418" stroke-width="1"/><rect x="400.5" y="269" width="3.5" height="59" fill="#f06418" opacity="0.9"/><rect x="401.2" y="269" width="10.6" height="17" fill="none" stroke="#f06418" stroke-width="1.2"/><path d="M401.2 274.7L411.8 274.7" stroke="#f06418" stroke-width="1"/><path d="M401.2 280.4L411.8 280.4" stroke="#f06418" stroke-width="1"/><rect x="424.4" y="246.8" width="15.2" height="44.7" fill="none" stroke="#f06418" stroke-width="1.2"/><path d="M424.4 253.9L439.6 253.9" stroke="#f06418" stroke-width="1"/><path d="M424.4 261L439.6 261" stroke="#f06418" stroke-width="1"/><path d="M424.4 268.1L439.6 268.1" stroke="#f06418" stroke-width="1"/><path d="M424.4 275.2L439.6 275.2" stroke="#f06418" stroke-width="1"/><path d="M424.4 282.3L439.6 282.3" stroke="#f06418" stroke-width="1"/><path d="M424.4 289.4L439.6 289.4" stroke="#f06418" stroke-width="1"/><path d="M437.4 246.8L437.4 291.5" stroke="#f06418" stroke-width="1.1"/><rect x="448.2" y="246.8" width="14" height="79.2" fill="none" stroke="#f06418" stroke-width="1.2"/><path d="M448.2 254L462.2 254" stroke="#f06418" stroke-width="1"/><path d="M448.2 261.2L462.2 261.2" stroke="#f06418" stroke-width="1"/><path d="M448.2 268.4L462.2 268.4" stroke="#f06418" stroke-width="1"/><path d="M448.2 275.6L462.2 275.6" stroke="#f06418" stroke-width="1"/><path d="M448.2 282.8L462.2 282.8" stroke="#f06418" stroke-width="1"/><path d="M448.2 290L462.2 290" stroke="#f06418" stroke-width="1"/><path d="M448.2 297.2L462.2 297.2" stroke="#f06418" stroke-width="1"/><path d="M448.2 304.4L462.2 304.4" stroke="#f06418" stroke-width="1"/><path d="M448.2 311.6L462.2 311.6" stroke="#f06418" stroke-width="1"/><path d="M448.2 318.8L462.2 318.8" stroke="#f06418" stroke-width="1"/><path d="M460 246.8L460 326" stroke="#f06418" stroke-width="1.1"/><rect x="476.5" y="233.8" width="13.8" height="81.5" fill="none" stroke="#f06418" stroke-width="1.2"/><path d="M476.5 240.8L490.3 240.8" stroke="#f06418" stroke-width="1"/><path d="M476.5 247.8L490.3 247.8" stroke="#f06418" stroke-width="1"/><path d="M476.5 254.8L490.3 254.8" stroke="#f06418" stroke-width="1"/><path d="M476.5 261.8L490.3 261.8" stroke="#f06418" stroke-width="1"/><path d="M476.5 268.8L490.3 268.8" stroke="#f06418" stroke-width="1"/><path d="M476.5 275.8L490.3 275.8" stroke="#f06418" stroke-width="1"/><path d="M476.5 282.8L490.3 282.8" stroke="#f06418" stroke-width="1"/><path d="M476.5 289.8L490.3 289.8" stroke="#f06418" stroke-width="1"/><path d="M476.5 296.8L490.3 296.8" stroke="#f06418" stroke-width="1"/><path d="M476.5 303.8L490.3 303.8" stroke="#f06418" stroke-width="1"/><path d="M476.5 310.8L490.3 310.8" stroke="#f06418" stroke-width="1"/><path d="M483.4 233.6L483.4 315.3" stroke="#f06418" stroke-width="1"/><path d="M523.6 247.2L484 328.8" stroke="#f4f4f4" stroke-width="1.3"/><path d="M521.4 247.2L481.8 328.8" stroke="#f4f4f4" stroke-width="1.1" opacity="0.8"/><path d="M525.5 250L487 329" stroke="#e81c1c" stroke-width="1"/><path d="M496 247.5L524 247.5" stroke="#f4f4f4" stroke-width="1" opacity="0.6"/><path d="M278.6 246L278.6 329" stroke="#22e83a" stroke-width="1.2" opacity="0.9"/><path d="M292.2 246L292.2 329" stroke="#22e83a" stroke-width="1.2" opacity="0.9"/><path d="M307.6 246L307.6 329" stroke="#22e83a" stroke-width="1.2" opacity="0.9"/><rect x="269.8" y="247.5" width="7.8" height="5.6" fill="none" stroke="#f4f4f4" stroke-width="1.4"/><rect x="309.2" y="248.5" width="6.6" height="5.2" fill="none" stroke="#f4f4f4" stroke-width="1.3"/><rect x="309.2" y="255.5" width="6.6" height="5.2" fill="none" stroke="#f4f4f4" stroke-width="1.3"/><rect x="269.8" y="261.5" width="7.8" height="5.6" fill="none" stroke="#f4f4f4" stroke-width="1.4"/><rect x="309.2" y="262.5" width="6.6" height="5.2" fill="none" stroke="#f4f4f4" stroke-width="1.3"/><rect x="269.8" y="268.5" width="7.8" height="5.6" fill="none" stroke="#f4f4f4" stroke-width="1.4"/><rect x="281.4" y="269" width="5" height="5.4" fill="none" stroke="#e0e0e0" stroke-width="1"/><rect x="269.8" y="275.5" width="7.8" height="5.6" fill="none" stroke="#f4f4f4" stroke-width="1.4"/><rect x="309.2" y="276.5" width="6.6" height="5.2" fill="none" stroke="#f4f4f4" stroke-width="1.3"/><rect x="280.5" y="276" width="5" height="5.4" fill="none" stroke="#e0e0e0" stroke-width="1"/><rect x="269.8" y="282.5" width="7.8" height="5.6" fill="none" stroke="#f4f4f4" stroke-width="1.4"/><rect x="309.2" y="283.5" width="6.6" height="5.2" fill="none" stroke="#f4f4f4" stroke-width="1.3"/><rect x="269.8" y="289.5" width="7.8" height="5.6" fill="none" stroke="#f4f4f4" stroke-width="1.4"/><rect x="309.2" y="290.5" width="6.6" height="5.2" fill="none" stroke="#f4f4f4" stroke-width="1.3"/><rect x="269.8" y="296.5" width="7.8" height="5.6" fill="none" stroke="#f4f4f4" stroke-width="1.4"/><rect x="309.2" y="297.5" width="6.6" height="5.2" fill="none" stroke="#f4f4f4" stroke-width="1.3"/><rect x="280.5" y="297" width="5" height="5.4" fill="none" stroke="#e0e0e0" stroke-width="1"/><rect x="309.2" y="304.5" width="6.6" height="5.2" fill="none" stroke="#f4f4f4" stroke-width="1.3"/><rect x="282.5" y="304" width="5" height="5.4" fill="none" stroke="#e0e0e0" stroke-width="1"/><rect x="309.2" y="311.5" width="6.6" height="5.2" fill="none" stroke="#f4f4f4" stroke-width="1.3"/><rect x="269.8" y="317.5" width="7.8" height="5.6" fill="none" stroke="#f4f4f4" stroke-width="1.4"/><rect x="309.2" y="318.5" width="6.6" height="5.2" fill="none" stroke="#f4f4f4" stroke-width="1.3"/><rect x="282.4" y="318" width="5" height="5.4" fill="none" stroke="#e0e0e0" stroke-width="1"/><rect x="286.5" y="247.5" width="4.5" height="9" fill="none" stroke="#d8d8d8" stroke-width="1"/><rect x="286.5" y="268.5" width="4.5" height="9" fill="none" stroke="#d8d8d8" stroke-width="1"/><rect x="286.5" y="289.5" width="4.5" height="9" fill="none" stroke="#d8d8d8" stroke-width="1"/><rect x="286.5" y="310.5" width="4.5" height="9" fill="none" stroke="#d8d8d8" stroke-width="1"/><rect x="285.2" y="292.3" width="3.6" height="1" fill="#22e83a" opacity="0.92"/><rect x="285.4" y="296.7" width="2.3" height="1" fill="#f4f4f4" opacity="0.92"/><rect x="288.2" y="250.4" width="1.4" height="3" fill="#22e83a" opacity="0.66"/><rect x="279.7" y="289.8" width="3.7" height="1.3" fill="#f4f4f4" opacity="0.91"/><rect x="283.6" y="294.9" width="1.3" height="2.7" fill="#f4f4f4" opacity="0.86"/><rect x="285.2" y="269.5" width="1.5" height="3.3" fill="#c8c8c8" opacity="0.73"/><rect x="282.4" y="270.4" width="1" height="1.8" fill="#f4f4f4" opacity="0.72"/><rect x="280.3" y="248.4" width="3.8" height="0.9" fill="#f4f4f4" opacity="0.75"/><rect x="288.4" y="281" width="1.4" height="2.2" fill="#c8c8c8" opacity="0.63"/><rect x="283.7" y="325.1" width="3.3" height="0.9" fill="#f4f4f4" opacity="0.79"/><rect x="285.6" y="302.2" width="2" height="1.4" fill="#f4f4f4" opacity="0.65"/><rect x="287.5" y="256.4" width="0.9" height="3.7" fill="#22e83a" opacity="0.99"/><rect x="286.9" y="327.8" width="2.5" height="0.8" fill="#f4f4f4" opacity="0.86"/><rect x="280.8" y="327.1" width="1.5" height="0.9" fill="#f4f4f4" opacity="0.93"/><rect x="284.3" y="253" width="1.1" height="3" fill="#f4f4f4" opacity="0.75"/><rect x="285.2" y="324.7" width="1" height="2.5" fill="#22e83a" opacity="0.85"/><rect x="283.4" y="265.5" width="2" height="1.4" fill="#c8c8c8" opacity="0.98"/><rect x="282" y="324" width="1.2" height="1.8" fill="#22e83a" opacity="0.62"/><rect x="291.5" y="266.3" width="0.8" height="1.3" fill="#22e83a" opacity="0.72"/><rect x="281.7" y="305.3" width="2.7" height="1.4" fill="#f4f4f4" opacity="0.85"/><rect x="280.4" y="264.2" width="0.9" height="2.5" fill="#f4f4f4" opacity="0.7"/><rect x="280.1" y="269.8" width="1" height="2.4" fill="#c8c8c8" opacity="0.96"/><rect x="291.8" y="300.2" width="0.8" height="1.6" fill="#c8c8c8" opacity="0.61"/><rect x="290.9" y="303.8" width="1.1" height="1.2" fill="#f4f4f4" opacity="0.89"/><rect x="283.5" y="327.9" width="2.4" height="0.8" fill="#f4f4f4" opacity="0.97"/><rect x="288.7" y="257.5" width="3.2" height="1.5" fill="#22e83a" opacity="0.95"/><rect x="284.7" y="311" width="1.3" height="2.5" fill="#22e83a" opacity="0.83"/><rect x="287.1" y="253.5" width="1.5" height="3.3" fill="#f4f4f4" opacity="0.76"/><rect x="288.7" y="294.1" width="2.9" height="1.3" fill="#22e83a" opacity="0.81"/><rect x="283.4" y="254.1" width="3.2" height="1.2" fill="#f4f4f4" opacity="0.85"/><rect x="291" y="267.7" width="1" height="1.3" fill="#f4f4f4" opacity="0.81"/><rect x="288.9" y="274.7" width="2.1" height="1.2" fill="#22e83a" opacity="0.7"/><rect x="287.4" y="312.1" width="1.2" height="3" fill="#f4f4f4" opacity="0.73"/><rect x="281.2" y="287.2" width="1.6" height="2.2" fill="#f4f4f4" opacity="0.67"/><rect x="285.1" y="269.3" width="1.2" height="2.8" fill="#f4f4f4" opacity="0.87"/><rect x="288.5" y="315.2" width="1.7" height="0.9" fill="#c8c8c8" opacity="0.95"/><rect x="280" y="304.4" width="3.1" height="1.3" fill="#c8c8c8" opacity="0.86"/><rect x="284.6" y="262.4" width="1.9" height="0.9" fill="#22e83a" opacity="0.85"/><rect x="285.1" y="298" width="1.4" height="2" fill="#22e83a" opacity="0.79"/><rect x="281.7" y="247.9" width="0.9" height="2.1" fill="#22e83a" opacity="0.91"/><rect x="286.2" y="323.7" width="1.4" height="2.5" fill="#c8c8c8" opacity="0.92"/><rect x="290.8" y="254.1" width="1.2" height="1.3" fill="#22e83a" opacity="0.96"/><rect x="284.2" y="293.1" width="1.6" height="2.7" fill="#c8c8c8" opacity="0.86"/><rect x="282.1" y="305.5" width="3.7" height="1.6" fill="#f4f4f4" opacity="0.99"/><rect x="286.2" y="311.1" width="3.3" height="0.9" fill="#22e83a" opacity="0.8"/><rect x="292.7" y="256.1" width="1.7" height="1.6" fill="#20e0e0" opacity="0.81"/><rect x="303.5" y="258.3" width="1" height="3.4" fill="#f4f4f4" opacity="0.78"/><rect x="298.9" y="327.7" width="4.2" height="0.8" fill="#f4f4f4" opacity="0.74"/><rect x="295.7" y="278.7" width="2.3" height="1.3" fill="#22e83a" opacity="0.82"/><rect x="307.3" y="314.9" width="0.8" height="1.5" fill="#20e0e0" opacity="0.75"/><rect x="293.8" y="290" width="1.1" height="4.3" fill="#e03030" opacity="0.89"/><rect x="295.5" y="298.9" width="2.4" height="1.1" fill="#22e83a" opacity="0.83"/><rect x="300" y="299.7" width="1.6" height="5" fill="#20e0e0" opacity="0.92"/><rect x="297.2" y="261.3" width="1.1" height="2.1" fill="#d040d0" opacity="0.61"/><rect x="304.8" y="277.4" width="1.1" height="2.6" fill="#f4f4f4" opacity="0.94"/><rect x="306.2" y="256.2" width="1.2" height="4.3" fill="#22e83a" opacity="0.82"/><rect x="294.3" y="255" width="1" height="2.1" fill="#f4f4f4" opacity="1.0"/><rect x="294.9" y="251.7" width="2.8" height="1.3" fill="#d040d0" opacity="0.85"/><rect x="293.1" y="256.1" width="1.3" height="3.2" fill="#f4f4f4" opacity="0.93"/><rect x="292.9" y="286.7" width="1.5" height="1.2" fill="#e03030" opacity="0.71"/><rect x="295.2" y="250.7" width="1.3" height="4.7" fill="#f4f4f4" opacity="0.95"/><rect x="304.7" y="323.7" width="1.3" height="3.5" fill="#22e83a" opacity="0.81"/><rect x="303.5" y="287.8" width="1.4" height="3.1" fill="#22e83a" opacity="0.89"/><rect x="299.7" y="257.8" width="1.1" height="2.2" fill="#f4f4f4" opacity="0.72"/><rect x="298.4" y="309.6" width="1" height="3" fill="#f4f4f4" opacity="0.66"/><rect x="298.4" y="271.9" width="1.1" height="3.6" fill="#20e0e0" opacity="0.97"/><rect x="296.7" y="323.1" width="3.7" height="1.5" fill="#f4f4f4" opacity="0.7"/><rect x="295.6" y="312.9" width="1.6" height="1.2" fill="#20e0e0" opacity="0.88"/><rect x="296.2" y="273.1" width="1.2" height="4.2" fill="#22e83a" opacity="0.63"/><rect x="296.4" y="297.6" width="1.2" height="3.8" fill="#e03030" opacity="0.86"/><rect x="299" y="252.5" width="3.2" height="0.9" fill="#f4f4f4" opacity="0.6"/><rect x="298.4" y="308.4" width="1.1" height="2.6" fill="#22e83a" opacity="0.96"/><rect x="307.5" y="266.4" width="0.8" height="2.6" fill="#f4f4f4" opacity="0.64"/><rect x="301.4" y="262.2" width="1.2" height="2.6" fill="#20e0e0" opacity="0.79"/><rect x="307.1" y="268" width="0.9" height="1.5" fill="#20e0e0" opacity="0.91"/><rect x="293.2" y="293.2" width="4.8" height="1.4" fill="#22e83a" opacity="0.73"/><rect x="307.7" y="311.5" width="0.8" height="1.4" fill="#f4f4f4" opacity="0.77"/><rect x="304.4" y="272" width="1.1" height="4.5" fill="#f4f4f4" opacity="0.82"/><rect x="293.7" y="287" width="3.2" height="1.2" fill="#e03030" opacity="0.87"/><rect x="306.5" y="314" width="1.5" height="1.2" fill="#20e0e0" opacity="0.74"/><rect x="307" y="278.7" width="1" height="2.3" fill="#20e0e0" opacity="0.62"/><rect x="306" y="283.1" width="2" height="1.5" fill="#20e0e0" opacity="0.89"/><rect x="306.6" y="306.8" width="1.4" height="1.4" fill="#20e0e0" opacity="0.78"/><rect x="294.6" y="294.4" width="2.8" height="1.1" fill="#22e83a" opacity="0.74"/><rect x="307.4" y="281.1" width="0.8" height="4.4" fill="#20e0e0" opacity="0.77"/><rect x="293.6" y="299.8" width="1.6" height="1.9" fill="#22e83a" opacity="0.94"/><rect x="303.5" y="272.1" width="1.8" height="1" fill="#e03030" opacity="0.92"/><rect x="300.9" y="286.4" width="3" height="1" fill="#20e0e0" opacity="0.7"/><rect x="297.5" y="316" width="1.4" height="1.9" fill="#22e83a" opacity="0.88"/><rect x="302" y="315.9" width="1.3" height="4.2" fill="#22e83a" opacity="0.71"/><rect x="300.9" y="310.7" width="1.5" height="4.9" fill="#e03030" opacity="0.7"/><rect x="293.7" y="296.7" width="1" height="4.9" fill="#f4f4f4" opacity="0.89"/><rect x="303.6" y="306.9" width="2.1" height="1.2" fill="#20e0e0" opacity="0.65"/><rect x="306.1" y="275.8" width="1.9" height="1.2" fill="#20e0e0" opacity="0.61"/><rect x="298.3" y="308.8" width="2.6" height="1" fill="#f4f4f4" opacity="0.64"/><rect x="299.6" y="287.2" width="0.9" height="4.6" fill="#f4f4f4" opacity="0.85"/><rect x="297" y="260.7" width="1.7" height="1.6" fill="#f4f4f4" opacity="0.83"/><rect x="296.2" y="277" width="1.7" height="1.1" fill="#20e0e0" opacity="0.93"/><rect x="293.5" y="279.7" width="3.8" height="1.1" fill="#d040d0" opacity="0.82"/><rect x="298.6" y="270.3" width="2.4" height="1.5" fill="#f4f4f4" opacity="0.84"/><rect x="306.8" y="276.1" width="1.2" height="1.4" fill="#20e0e0" opacity="0.99"/><rect x="303.5" y="298.2" width="1.3" height="2" fill="#22e83a" opacity="0.88"/><rect x="302.6" y="255.5" width="1.2" height="2.7" fill="#22e83a" opacity="0.66"/><rect x="299.8" y="276.6" width="2.7" height="1.6" fill="#22e83a" opacity="0.71"/><rect x="306.2" y="274.8" width="1.8" height="1.3" fill="#20e0e0" opacity="0.89"/><rect x="292.8" y="290.2" width="1.6" height="3.2" fill="#d040d0" opacity="0.63"/><rect x="301.7" y="294.6" width="3.3" height="1.3" fill="#e03030" opacity="0.6"/><rect x="300.3" y="251.1" width="1.1" height="4.9" fill="#20e0e0" opacity="0.71"/><rect x="299.5" y="259.9" width="3.9" height="1.6" fill="#22e83a" opacity="0.65"/><rect x="302.7" y="295.7" width="2.4" height="1.1" fill="#22e83a" opacity="0.99"/><rect x="305.8" y="249.1" width="2.2" height="1.3" fill="#20e0e0" opacity="0.78"/><rect x="307.3" y="284.9" width="0.8" height="2.1" fill="#20e0e0" opacity="0.74"/><rect x="307.2" y="296.1" width="0.8" height="1" fill="#20e0e0" opacity="0.83"/><rect x="293.6" y="264.5" width="3" height="1.1" fill="#f4f4f4" opacity="0.88"/><rect x="304.3" y="277.9" width="3.5" height="1" fill="#f4f4f4" opacity="0.65"/><rect x="301.2" y="254" width="1.1" height="4.2" fill="#f4f4f4" opacity="0.99"/><rect x="297.6" y="313.5" width="1.6" height="1.7" fill="#20e0e0" opacity="0.67"/><rect x="299.2" y="327.3" width="1.2" height="0.8" fill="#d040d0" opacity="0.91"/><rect x="306.3" y="292.7" width="1.4" height="4.4" fill="#f4f4f4" opacity="1.0"/><rect x="301.9" y="267.2" width="3.1" height="1" fill="#22e83a" opacity="0.83"/><rect x="306.1" y="256.1" width="1.9" height="1" fill="#d040d0" opacity="0.7"/><rect x="297.8" y="311.4" width="1.2" height="2.7" fill="#d040d0" opacity="0.75"/><rect x="293.3" y="276.2" width="1.1" height="3.2" fill="#f4f4f4" opacity="0.9"/><rect x="295.6" y="275.9" width="1.1" height="4.4" fill="#22e83a" opacity="0.7"/><rect x="296.8" y="277.7" width="1" height="2.6" fill="#d040d0" opacity="0.64"/><rect x="302.2" y="281.3" width="1.3" height="3.4" fill="#20e0e0" opacity="0.98"/><rect x="302.7" y="309.8" width="1.4" height="4.5" fill="#22e83a" opacity="0.62"/><rect x="297.1" y="275.8" width="4.2" height="1.1" fill="#d040d0" opacity="0.98"/><rect x="299.2" y="294.8" width="1.5" height="2.6" fill="#22e83a" opacity="0.81"/><rect x="302.6" y="318.5" width="4.8" height="1.4" fill="#20e0e0" opacity="0.76"/><rect x="303.4" y="247" width="1.4" height="2.3" fill="#f4f4f4" opacity="0.77"/><rect x="306.6" y="282.3" width="1.4" height="1.9" fill="#20e0e0" opacity="0.93"/><rect x="304" y="265.4" width="1.2" height="3" fill="#f4f4f4" opacity="0.81"/><rect x="303.5" y="301.9" width="4.5" height="1.3" fill="#d040d0" opacity="0.7"/><rect x="306.6" y="280.9" width="1.1" height="2.2" fill="#f4f4f4" opacity="0.61"/><rect x="305.1" y="273.5" width="1.2" height="3.3" fill="#f4f4f4" opacity="0.89"/><rect x="302.5" y="276.4" width="1.3" height="3.8" fill="#22e83a" opacity="0.77"/><rect x="305.7" y="260.5" width="1.5" height="3.4" fill="#f4f4f4" opacity="0.87"/><rect x="301.8" y="263.4" width="1.6" height="1.2" fill="#f4f4f4" opacity="0.74"/><rect x="297.3" y="314.8" width="1" height="2" fill="#22e83a" opacity="0.61"/><rect x="295.4" y="309.9" width="2.8" height="0.9" fill="#e03030" opacity="0.97"/><rect x="303.3" y="270.1" width="2.3" height="1.4" fill="#f4f4f4" opacity="0.61"/><rect x="299.8" y="322.1" width="1.5" height="4.8" fill="#22e83a" opacity="0.71"/><rect x="307.2" y="319.4" width="0.8" height="1.5" fill="#e03030" opacity="0.94"/><rect x="295.5" y="275" width="1.3" height="2.5" fill="#22e83a" opacity="0.96"/><rect x="296.5" y="316.5" width="0.9" height="2.5" fill="#22e83a" opacity="0.63"/><rect x="295.4" y="275.8" width="0.9" height="4.1" fill="#e03030" opacity="0.64"/><rect x="303.6" y="247.9" width="1.2" height="4.7" fill="#20e0e0" opacity="0.87"/><rect x="306.3" y="277.5" width="1.7" height="1.1" fill="#e03030" opacity="0.8"/><rect x="294.7" y="259.5" width="1" height="2" fill="#22e83a" opacity="0.85"/><rect x="302" y="247.8" width="2.4" height="1.3" fill="#d040d0" opacity="0.97"/><rect x="297.9" y="288.3" width="3.8" height="1" fill="#f4f4f4" opacity="0.99"/><rect x="304" y="321.7" width="1.2" height="2" fill="#22e83a" opacity="0.7"/><rect x="307.8" y="275.4" width="0.8" height="3.5" fill="#f4f4f4" opacity="0.62"/><rect x="302.8" y="312" width="1.6" height="3.7" fill="#f4f4f4" opacity="0.74"/><rect x="308.8" y="264.3" width="1.1" height="1.6" fill="#22e83a" opacity="0.62"/><rect x="311.2" y="273.8" width="1.6" height="3.7" fill="#22e83a" opacity="0.75"/><rect x="308" y="308.2" width="1.2" height="3.4" fill="#22e83a" opacity="0.68"/><rect x="310.9" y="321.9" width="1.8" height="1.6" fill="#22e83a" opacity="0.64"/><rect x="309.6" y="248.6" width="1.3" height="2.1" fill="#22e83a" opacity="0.79"/><rect x="315.3" y="286.9" width="1.4" height="2.9" fill="#f4f4f4" opacity="0.83"/><rect x="315.7" y="294.6" width="1.7" height="1.4" fill="#22e83a" opacity="0.94"/><rect x="310.9" y="303.4" width="2" height="1" fill="#22e83a" opacity="1.0"/><rect x="316.6" y="257.7" width="1.4" height="1.2" fill="#22e83a" opacity="0.68"/><rect x="308.4" y="247.5" width="1.6" height="2.7" fill="#f4f4f4" opacity="0.98"/><rect x="316.6" y="297.1" width="1.1" height="2.5" fill="#f4f4f4" opacity="0.83"/><rect x="311.7" y="314.1" width="3.2" height="1.1" fill="#f4f4f4" opacity="0.75"/><rect x="314.2" y="325.4" width="3.8" height="1.3" fill="#22e83a" opacity="0.99"/><rect x="315.8" y="272.6" width="1.2" height="1.7" fill="#22e83a" opacity="0.73"/><rect x="309.7" y="276.6" width="1.3" height="3.5" fill="#22e83a" opacity="0.65"/><rect x="314.9" y="268.2" width="1.2" height="3.6" fill="#f4f4f4" opacity="0.61"/><rect x="317.7" y="261.8" width="0.8" height="1" fill="#22e83a" opacity="0.81"/><rect x="311.2" y="264.9" width="3.9" height="1.6" fill="#22e83a" opacity="0.69"/><rect x="312.4" y="283.5" width="3.6" height="1.1" fill="#22e83a" opacity="0.82"/><rect x="309.3" y="253.8" width="1.6" height="3.7" fill="#22e83a" opacity="0.9"/><rect x="308.7" y="294.7" width="0.9" height="2" fill="#22e83a" opacity="1.0"/><rect x="317.8" y="267" width="0.8" height="1.1" fill="#22e83a" opacity="0.85"/><rect x="308.1" y="303" width="2.8" height="1.4" fill="#22e83a" opacity="0.67"/><rect x="308.9" y="305.7" width="2.7" height="1.3" fill="#22e83a" opacity="0.81"/><rect x="309.3" y="269.3" width="1.1" height="3.1" fill="#22e83a" opacity="0.9"/><rect x="270.1" y="300.9" width="2.8" height="1.6" fill="#f4f4f4" opacity="0.79"/><rect x="272.9" y="284.7" width="1.5" height="1.3" fill="#f4f4f4" opacity="0.99"/><rect x="268.3" y="274.9" width="4.4" height="1" fill="#22e83a" opacity="0.87"/><rect x="267.7" y="280.2" width="1.7" height="1.5" fill="#22e83a" opacity="0.8"/><rect x="263.5" y="327.9" width="3" height="1" fill="#22e83a" opacity="0.73"/><rect x="272.6" y="260.4" width="1.3" height="1.8" fill="#f4f4f4" opacity="0.63"/><rect x="272.3" y="301.8" width="2.8" height="0.9" fill="#22e83a" opacity="0.89"/><rect x="278.4" y="327.1" width="0.8" height="1.5" fill="#f4f4f4" opacity="0.75"/><rect x="267.3" y="267.7" width="3.3" height="1.5" fill="#22e83a" opacity="0.8"/><rect x="262.5" y="314.5" width="1.6" height="1.4" fill="#22e83a" opacity="0.62"/><rect x="265.5" y="296.8" width="1.8" height="1.1" fill="#f4f4f4" opacity="0.77"/><rect x="270.5" y="296.4" width="3.1" height="1" fill="#f4f4f4" opacity="0.71"/><rect x="270.1" y="325.6" width="5" height="1.2" fill="#22e83a" opacity="0.82"/><rect x="265.1" y="309.8" width="0.9" height="1.6" fill="#22e83a" opacity="0.91"/><rect x="267.8" y="266.8" width="1.1" height="1.6" fill="#22e83a" opacity="0.74"/><rect x="271.3" y="259.7" width="1.4" height="1.6" fill="#22e83a" opacity="0.65"/><rect x="275.3" y="288.2" width="1.1" height="2" fill="#22e83a" opacity="0.96"/><rect x="264.8" y="270.9" width="4.8" height="1.3" fill="#22e83a" opacity="0.88"/><rect x="274" y="264.6" width="0.9" height="1.5" fill="#22e83a" opacity="0.61"/><rect x="271.5" y="268.8" width="3" height="1.6" fill="#22e83a" opacity="0.82"/><rect x="272.6" y="322.4" width="1.2" height="1.8" fill="#22e83a" opacity="0.96"/><rect x="275.4" y="294.6" width="1.3" height="1.7" fill="#22e83a" opacity="0.66"/><rect x="297.4" y="298.2" width="6.3" height="1.3" fill="#22e83a" opacity="0.81"/><rect x="317" y="320.3" width="1" height="3.9" fill="#22e83a" opacity="0.98"/><rect x="300.5" y="271.4" width="1.5" height="5.6" fill="#22e83a" opacity="0.94"/><rect x="302.5" y="313" width="1.3" height="5.2" fill="#22e83a" opacity="0.65"/><rect x="272.7" y="326.4" width="1.6" height="1.6" fill="#22e83a" opacity="0.75"/><rect x="301.4" y="309.3" width="3.4" height="1.4" fill="#22e83a" opacity="0.82"/><rect x="288.7" y="302.7" width="5" height="1.4" fill="#22e83a" opacity="0.94"/><rect x="273" y="254.6" width="3.8" height="1.1" fill="#22e83a" opacity="0.95"/><rect x="302.5" y="278.5" width="1.3" height="4" fill="#f4f4f4" opacity="0.94"/><rect x="293.3" y="247.8" width="5.8" height="1" fill="#f4f4f4" opacity="0.95"/><rect x="270.7" y="290.9" width="1.5" height="6.1" fill="#f4f4f4" opacity="0.95"/><rect x="313.7" y="306.1" width="2" height="1.3" fill="#f4f4f4" opacity="0.89"/><rect x="292.2" y="281.2" width="6.3" height="1.6" fill="#f4f4f4" opacity="0.79"/><rect x="271" y="279.2" width="6.8" height="1.5" fill="#22e83a" opacity="0.73"/><rect x="315.7" y="320.5" width="1.6" height="6.1" fill="#22e83a" opacity="0.77"/><rect x="308.9" y="322" width="1.3" height="4.3" fill="#22e83a" opacity="0.94"/><rect x="300" y="305.4" width="5.9" height="1.5" fill="#22e83a" opacity="0.63"/><rect x="275.6" y="316.8" width="1" height="6.6" fill="#22e83a" opacity="0.91"/><rect x="297.5" y="327.6" width="6.7" height="0.8" fill="#22e83a" opacity="0.97"/><rect x="309.1" y="258.2" width="1.3" height="2.7" fill="#22e83a" opacity="0.82"/><rect x="302.4" y="274.1" width="1.4" height="6.3" fill="#22e83a" opacity="0.99"/><rect x="306.2" y="314.7" width="1.2" height="3.1" fill="#22e83a" opacity="0.73"/><rect x="295.2" y="305.2" width="4.2" height="1.2" fill="#22e83a" opacity="0.68"/><rect x="273.9" y="263.5" width="2.5" height="1.3" fill="#22e83a" opacity="0.65"/><rect x="293.1" y="284.6" width="1.1" height="1.6" fill="#22e83a" opacity="0.63"/><rect x="286.2" y="276.3" width="4.9" height="1.5" fill="#22e83a" opacity="0.8"/><rect x="298.8" y="293.4" width="1.7" height="1" fill="#22e83a" opacity="0.99"/><rect x="286.6" y="256.5" width="1.6" height="3.3" fill="#22e83a" opacity="0.92"/><rect x="272" y="266.2" width="1.5" height="3.6" fill="#22e83a" opacity="0.95"/><rect x="273.7" y="297.5" width="1.5" height="6" fill="#22e83a" opacity="0.94"/><rect x="304" y="269.8" width="1.3" height="2.8" fill="#f4f4f4" opacity="0.87"/><rect x="315.6" y="311.9" width="1.6" height="3.5" fill="#f4f4f4" opacity="0.78"/><rect x="283.4" y="313.8" width="3.6" height="1.2" fill="#22e83a" opacity="0.67"/><rect x="290.4" y="308.4" width="1.6" height="3.8" fill="#22e83a" opacity="0.66"/><rect x="314" y="287.6" width="1.5" height="4.4" fill="#f4f4f4" opacity="0.75"/><rect x="298.2" y="311" width="4.3" height="1.1" fill="#f4f4f4" opacity="0.82"/><rect x="296.1" y="269.9" width="1.4" height="3.8" fill="#f4f4f4" opacity="0.61"/><rect x="278.1" y="286.2" width="1.5" height="5.9" fill="#22e83a" opacity="0.68"/><rect x="291.6" y="313.7" width="3.9" height="1.3" fill="#22e83a" opacity="0.75"/><rect x="303.2" y="263" width="4.5" height="1.1" fill="#f4f4f4" opacity="0.93"/><rect x="301.2" y="297.3" width="1.1" height="1.7" fill="#22e83a" opacity="0.9"/><rect x="278.8" y="288.7" width="5.4" height="0.9" fill="#22e83a" opacity="0.77"/><rect x="285.2" y="320.1" width="1.4" height="5.9" fill="#f4f4f4" opacity="0.74"/><rect x="316.1" y="295.3" width="1.4" height="2.9" fill="#f4f4f4" opacity="1.0"/><rect x="273.8" y="282" width="1.2" height="2.3" fill="#22e83a" opacity="0.72"/><rect x="304.4" y="284.8" width="5.6" height="1.1" fill="#22e83a" opacity="0.87"/><rect x="270.1" y="259.8" width="5.5" height="1.5" fill="#22e83a" opacity="0.67"/><rect x="277.2" y="287" width="2.4" height="1.3" fill="#22e83a" opacity="0.72"/><rect x="277.9" y="290.1" width="1.2" height="2.2" fill="#22e83a" opacity="0.85"/><rect x="299.3" y="259.8" width="1.1" height="5.6" fill="#22e83a" opacity="0.74"/><rect x="315.1" y="261.1" width="1.9" height="0.9" fill="#22e83a" opacity="0.67"/><rect x="276.8" y="301" width="1.3" height="5.4" fill="#22e83a" opacity="0.9"/><rect x="315" y="297.3" width="3" height="1.2" fill="#f4f4f4" opacity="0.93"/><rect x="312.2" y="319.6" width="1.2" height="3.1" fill="#22e83a" opacity="0.86"/><rect x="312.8" y="276" width="1.4" height="2.3" fill="#22e83a" opacity="0.83"/><rect x="279.8" y="273.1" width="1" height="2.1" fill="#22e83a" opacity="0.69"/><rect x="289.1" y="284.1" width="1.2" height="3.6" fill="#22e83a" opacity="0.81"/><rect x="270.1" y="263.2" width="3" height="1.4" fill="#22e83a" opacity="0.64"/><rect x="275.7" y="276.7" width="1.4" height="6" fill="#22e83a" opacity="0.82"/><rect x="299.5" y="254.9" width="1.1" height="6.2" fill="#f4f4f4" opacity="0.75"/><rect x="286.5" y="287.9" width="2.1" height="1.4" fill="#22e83a" opacity="0.72"/><rect x="282.4" y="305.4" width="1.2" height="5.7" fill="#22e83a" opacity="0.78"/><rect x="283.2" y="310.6" width="6.9" height="1.3" fill="#22e83a" opacity="0.94"/><rect x="295.3" y="281.8" width="1.5" height="6.6" fill="#22e83a" opacity="0.95"/><rect x="311.9" y="274.6" width="3.2" height="1.1" fill="#f4f4f4" opacity="0.75"/><rect x="306.9" y="320.3" width="1.2" height="4.3" fill="#22e83a" opacity="0.69"/><rect x="295.3" y="288.9" width="1.5" height="4.3" fill="#22e83a" opacity="0.8"/><rect x="283.4" y="308.4" width="1.3" height="2.7" fill="#22e83a" opacity="0.67"/><rect x="311.1" y="313.5" width="1.5" height="3.7" fill="#f4f4f4" opacity="0.67"/><rect x="290.5" y="321.3" width="1.5" height="1.2" fill="#22e83a" opacity="0.96"/><rect x="312.2" y="314.8" width="5.1" height="1" fill="#22e83a" opacity="0.84"/><rect x="270.6" y="297.2" width="1.1" height="2.9" fill="#f4f4f4" opacity="0.66"/><rect x="317.9" y="275.7" width="0.8" height="1.4" fill="#22e83a" opacity="0.62"/><rect x="294" y="248.7" width="1.1" height="1.8" fill="#22e83a" opacity="0.63"/><rect x="279.8" y="318" width="1" height="4.1" fill="#22e83a" opacity="0.92"/><rect x="305" y="261" width="2.4" height="1.3" fill="#22e83a" opacity="0.87"/><rect x="272.8" y="260.9" width="1.4" height="5.3" fill="#22e83a" opacity="0.76"/><rect x="302.8" y="294.9" width="4.3" height="1" fill="#22e83a" opacity="0.79"/><rect x="297.1" y="324.9" width="1.5" height="3.1" fill="#22e83a" opacity="0.89"/><rect x="305.3" y="257.6" width="1.2" height="6.8" fill="#22e83a" opacity="0.88"/><rect x="288.4" y="292.5" width="1.1" height="6.9" fill="#22e83a" opacity="0.76"/><rect x="298.8" y="247.6" width="2.3" height="1.2" fill="#22e83a" opacity="0.84"/><rect x="293.5" y="310.4" width="1.5" height="6.7" fill="#22e83a" opacity="0.65"/><rect x="273.3" y="303.3" width="3.8" height="1.2" fill="#22e83a" opacity="0.64"/><rect x="307.3" y="279.1" width="3.6" height="1.4" fill="#22e83a" opacity="0.62"/><rect x="283.8" y="319.6" width="1.4" height="3.6" fill="#22e83a" opacity="0.61"/><rect x="306.5" y="297.8" width="0.9" height="6.7" fill="#f4f4f4" opacity="0.98"/><rect x="286.9" y="310.6" width="5.2" height="1" fill="#f4f4f4" opacity="0.6"/><rect x="272.3" y="276.4" width="6.5" height="1" fill="#f4f4f4" opacity="0.84"/><rect x="310" y="279.8" width="2.9" height="1.4" fill="#22e83a" opacity="0.63"/><rect x="314.4" y="251" width="2.9" height="1.2" fill="#22e83a" opacity="0.96"/><rect x="283.2" y="261.7" width="6.9" height="1" fill="#f4f4f4" opacity="0.85"/><rect x="281.4" y="314" width="5.9" height="1.1" fill="#22e83a" opacity="0.6"/><rect x="285.6" y="252.8" width="1.4" height="1.9" fill="#f4f4f4" opacity="0.63"/><rect x="270.1" y="312.2" width="0.9" height="2.9" fill="#22e83a" opacity="1.0"/><rect x="297.5" y="283.5" width="3.2" height="3.2" fill="#f0e020"/><path d="M317.5 247L317.5 328" stroke="#22e83a" stroke-width="1.6"/><rect x="274.9" y="240.8" width="2.7" height="1.4" fill="#22e83a" opacity="0.86"/><rect x="287.7" y="240.6" width="5.6" height="1.1" fill="#c8c8c8" opacity="0.95"/><rect x="288.5" y="242.3" width="1.3" height="1.7" fill="#f4f4f4" opacity="0.82"/><rect x="311.2" y="233.3" width="3" height="1" fill="#f4f4f4" opacity="0.68"/><rect x="331.6" y="236.7" width="1" height="2.5" fill="#c8c8c8" opacity="0.95"/><rect x="305.6" y="239.9" width="1.9" height="1.5" fill="#f4f4f4" opacity="0.81"/><rect x="280.6" y="237.3" width="2.8" height="1.1" fill="#22e83a" opacity="0.65"/><rect x="332.9" y="234.9" width="0.8" height="1" fill="#f4f4f4" opacity="0.81"/><rect x="274" y="237.7" width="1.2" height="2.2" fill="#22e83a" opacity="0.77"/><rect x="306.7" y="232.3" width="3.5" height="1.3" fill="#c8c8c8" opacity="0.8"/><rect x="305" y="237.8" width="0.9" height="2.6" fill="#f4f4f4" opacity="0.98"/><rect x="295.5" y="235.9" width="1.1" height="2" fill="#f4f4f4" opacity="0.68"/><rect x="308.8" y="237.6" width="1.9" height="1" fill="#f4f4f4" opacity="0.61"/><rect x="268" y="238.1" width="1" height="2.9" fill="#f4f4f4" opacity="0.91"/><rect x="268.1" y="234.5" width="2.4" height="1.4" fill="#f4f4f4" opacity="0.73"/><rect x="314.9" y="243.5" width="1.3" height="1.5" fill="#f4f4f4" opacity="0.9"/><rect x="301" y="242.8" width="2.6" height="1.2" fill="#f4f4f4" opacity="0.82"/><rect x="327.1" y="237.8" width="5.7" height="1.2" fill="#f4f4f4" opacity="0.74"/><rect x="285.1" y="232.4" width="5.7" height="1" fill="#22e83a" opacity="0.79"/><rect x="276.2" y="243.6" width="1.1" height="1.4" fill="#f4f4f4" opacity="0.77"/><rect x="276.4" y="234.1" width="1" height="1.5" fill="#22e83a" opacity="0.96"/><rect x="331.8" y="243" width="1.2" height="2" fill="#f4f4f4" opacity="0.88"/><rect x="305.6" y="237.6" width="1.8" height="1.2" fill="#c8c8c8" opacity="1.0"/><rect x="309.7" y="240.1" width="0.9" height="2.8" fill="#f4f4f4" opacity="0.65"/><rect x="271.3" y="240" width="5.1" height="1.1" fill="#22e83a" opacity="0.65"/><rect x="292.6" y="239.2" width="1.2" height="2.8" fill="#f4f4f4" opacity="0.89"/><rect x="269.3" y="232.1" width="4.6" height="1.4" fill="#f4f4f4" opacity="0.6"/><rect x="332.8" y="234.3" width="0.8" height="2.8" fill="#f4f4f4" opacity="0.76"/><rect x="518.3" y="231.1" width="6.7" height="0.9" fill="#f4f4f4" opacity="0.95"/><rect x="463.8" y="235.3" width="3.4" height="0.8" fill="#22e83a" opacity="0.71"/><rect x="383.6" y="232.1" width="1.5" height="1.6" fill="#f4f4f4" opacity="0.97"/><rect x="431.2" y="232.2" width="1.2" height="1.7" fill="#22e83a" opacity="0.92"/><rect x="417.3" y="232.6" width="6.2" height="1.6" fill="#22e83a" opacity="0.8"/><rect x="514.4" y="231.1" width="1.3" height="1.9" fill="#f4f4f4" opacity="0.94"/><rect x="336.3" y="233.6" width="1" height="1.6" fill="#f4f4f4" opacity="0.62"/><rect x="423" y="235.2" width="4.3" height="0.8" fill="#22e83a" opacity="0.98"/><rect x="400.9" y="232.2" width="4.9" height="1.2" fill="#22e83a" opacity="0.79"/><rect x="500.1" y="234.9" width="2.1" height="1.1" fill="#22e83a" opacity="0.75"/><rect x="494.3" y="235.6" width="1.7" height="0.8" fill="#f4f4f4" opacity="0.98"/><rect x="363.4" y="233.5" width="1.2" height="1.8" fill="#22e83a" opacity="0.79"/><rect x="348.7" y="235.8" width="1.3" height="0.8" fill="#f4f4f4" opacity="0.7"/><rect x="349.3" y="231" width="1.5" height="1.7" fill="#22e83a" opacity="0.62"/><rect x="512.5" y="232.5" width="6" height="1.5" fill="#22e83a" opacity="0.96"/><rect x="504.4" y="231.1" width="1.5" height="1.5" fill="#22e83a" opacity="0.7"/><rect x="428.8" y="233.6" width="1.4" height="1.7" fill="#22e83a" opacity="0.73"/><rect x="449.1" y="234.5" width="1.5" height="1.5" fill="#22e83a" opacity="0.8"/><rect x="514.7" y="235.9" width="6.4" height="0.8" fill="#22e83a" opacity="0.64"/><rect x="399" y="234.7" width="1" height="1.3" fill="#22e83a" opacity="0.83"/><rect x="352.2" y="235.2" width="1.4" height="0.8" fill="#22e83a" opacity="0.82"/><rect x="477.3" y="232.8" width="1.4" height="1.8" fill="#f4f4f4" opacity="1.0"/><rect x="276" y="241" width="5" height="1.5" fill="#f0e020" opacity="0.9"/><rect x="395" y="254.4" width="1.5" height="1.5" fill="#22e83a" opacity="0.88"/><rect x="391.4" y="246.7" width="2.7" height="1" fill="#f4f4f4" opacity="0.9"/><rect x="393.5" y="263.7" width="4.6" height="1.5" fill="#20e0e0" opacity="0.87"/><rect x="385.3" y="253.7" width="1.4" height="2.4" fill="#f4f4f4" opacity="0.77"/><rect x="387" y="254.8" width="1.6" height="2.2" fill="#20e0e0" opacity="0.62"/><rect x="412.7" y="265" width="0.8" height="1.9" fill="#f4f4f4" opacity="0.72"/><rect x="397.9" y="242" width="0.9" height="3.6" fill="#22e83a" opacity="0.8"/><rect x="411.1" y="254.3" width="2.4" height="1.2" fill="#f4f4f4" opacity="0.61"/><rect x="388.7" y="247" width="0.9" height="1.6" fill="#22e83a" opacity="0.86"/><rect x="402" y="254.3" width="1.9" height="1" fill="#f4f4f4" opacity="0.65"/><rect x="384.8" y="258.8" width="0.9" height="3.6" fill="#f4f4f4" opacity="0.76"/><rect x="410.6" y="260.8" width="1.5" height="1.3" fill="#f4f4f4" opacity="0.97"/><rect x="387.5" y="244.4" width="2.9" height="1.5" fill="#22e83a" opacity="0.79"/><rect x="392" y="241.8" width="2.4" height="1.6" fill="#f4f4f4" opacity="0.75"/><rect x="408.1" y="243.4" width="3.1" height="1" fill="#f4f4f4" opacity="0.76"/><rect x="388.2" y="243.9" width="2.3" height="1" fill="#22e83a" opacity="0.87"/><rect x="408.4" y="265.8" width="1.5" height="2.7" fill="#f4f4f4" opacity="0.83"/><rect x="412.8" y="265.4" width="0.8" height="3.1" fill="#f4f4f4" opacity="0.68"/><rect x="397.3" y="244" width="3.7" height="1.4" fill="#20e0e0" opacity="0.89"/><rect x="393.6" y="253.9" width="0.9" height="2.3" fill="#22e83a" opacity="0.67"/><rect x="405.1" y="252.1" width="2.2" height="1" fill="#22e83a" opacity="0.61"/><rect x="384.5" y="250" width="0.9" height="3.8" fill="#20e0e0" opacity="0.61"/><rect x="402.6" y="244.4" width="1.1" height="2.8" fill="#20e0e0" opacity="0.94"/><rect x="409.3" y="259.9" width="1.3" height="3.5" fill="#f4f4f4" opacity="0.8"/><rect x="390.8" y="257.4" width="3.1" height="1.4" fill="#f4f4f4" opacity="0.67"/><rect x="390" y="242.8" width="1.6" height="3.5" fill="#f4f4f4" opacity="0.98"/><rect x="389" y="245.6" width="1.4" height="3.3" fill="#20e0e0" opacity="0.9"/><rect x="394.5" y="257" width="1.8" height="1" fill="#f4f4f4" opacity="0.61"/><rect x="388.9" y="260.4" width="1.2" height="3.4" fill="#f4f4f4" opacity="0.65"/><rect x="409.6" y="252.3" width="1.3" height="2.4" fill="#f4f4f4" opacity="0.78"/><rect x="397.1" y="250.3" width="2.8" height="1.5" fill="#f4f4f4" opacity="0.62"/><rect x="390.6" y="263.2" width="3.3" height="1.2" fill="#20e0e0" opacity="0.61"/><rect x="388.8" y="247.1" width="1.7" height="0.9" fill="#f4f4f4" opacity="0.76"/><rect x="409.1" y="253.4" width="4.4" height="1" fill="#f4f4f4" opacity="0.95"/><rect x="390.2" y="257.5" width="1.3" height="3.9" fill="#20e0e0" opacity="0.61"/><rect x="387.9" y="264.7" width="1.9" height="1.3" fill="#20e0e0" opacity="0.63"/><rect x="400" y="253.4" width="2.5" height="1.3" fill="#20e0e0" opacity="0.76"/><rect x="386.9" y="260.7" width="1.1" height="2.3" fill="#f4f4f4" opacity="0.98"/><rect x="397.4" y="261.7" width="1.5" height="3.1" fill="#f4f4f4" opacity="0.75"/><rect x="409.7" y="269.8" width="0.9" height="0.8" fill="#20e0e0" opacity="0.96"/><rect x="396.2" y="268.6" width="4.2" height="1.1" fill="#22e83a" opacity="0.61"/><rect x="404.8" y="261.6" width="1" height="3" fill="#f4f4f4" opacity="0.69"/><rect x="394.2" y="257.1" width="1.5" height="3.9" fill="#f4f4f4" opacity="0.93"/><rect x="406.7" y="249.5" width="3.6" height="1.2" fill="#f4f4f4" opacity="0.69"/><rect x="403.5" y="264.2" width="1.8" height="0.9" fill="#20e0e0" opacity="0.61"/><rect x="387.4" y="262.2" width="1.9" height="1.2" fill="#f4f4f4" opacity="0.61"/><rect x="410.1" y="261.2" width="1.1" height="3" fill="#22e83a" opacity="0.75"/><rect x="391.4" y="246" width="2.1" height="1.2" fill="#f4f4f4" opacity="0.98"/><rect x="412.6" y="244.4" width="0.9" height="3.4" fill="#f4f4f4" opacity="0.85"/><rect x="387.1" y="247.9" width="1.1" height="3.5" fill="#f4f4f4" opacity="0.92"/><rect x="396" y="250.1" width="4.9" height="1.1" fill="#22e83a" opacity="0.78"/><rect x="400.1" y="255.3" width="2" height="1.1" fill="#20e0e0" opacity="0.7"/><rect x="389.5" y="245.1" width="5" height="1.2" fill="#f4f4f4" opacity="0.65"/><rect x="408.7" y="249.4" width="1.2" height="2.3" fill="#22e83a" opacity="0.72"/><rect x="403.1" y="269.2" width="1.5" height="0.8" fill="#22e83a" opacity="0.85"/><rect x="395.9" y="251.8" width="1.2" height="4.6" fill="#f4f4f4" opacity="0.71"/><rect x="393.2" y="264.9" width="2.6" height="1.6" fill="#22e83a" opacity="0.61"/><rect x="410.7" y="267.7" width="1.3" height="0.8" fill="#f4f4f4" opacity="0.62"/><rect x="406.4" y="247.7" width="1.1" height="4" fill="#f4f4f4" opacity="0.89"/><rect x="389.3" y="261.1" width="2.1" height="1.5" fill="#f4f4f4" opacity="0.67"/><rect x="392.9" y="251.7" width="1" height="4.6" fill="#f4f4f4" opacity="0.94"/><rect x="393.8" y="250.1" width="4.5" height="1.2" fill="#f4f4f4" opacity="0.76"/><rect x="386.6" y="249.8" width="1.2" height="3.4" fill="#f4f4f4" opacity="0.71"/><rect x="386.7" y="247.3" width="2.1" height="0.9" fill="#f4f4f4" opacity="0.62"/><rect x="408.4" y="265.4" width="1.4" height="2.6" fill="#f4f4f4" opacity="0.77"/><rect x="404.5" y="248.8" width="5.3" height="1.6" fill="#22e83a" opacity="0.7"/><rect x="397.4" y="262.4" width="1" height="3.8" fill="#f4f4f4" opacity="0.82"/><rect x="410.2" y="252.2" width="1.1" height="4.7" fill="#f4f4f4" opacity="0.75"/><rect x="409" y="262.8" width="2.2" height="0.9" fill="#f4f4f4" opacity="0.67"/><rect x="403.3" y="248.4" width="1.3" height="3.2" fill="#f4f4f4" opacity="0.65"/><rect x="396" y="262.2" width="1.4" height="3.4" fill="#f4f4f4" opacity="0.8"/><rect x="411.2" y="265.8" width="0.8" height="1.6" fill="#f4f4f4" opacity="0.86"/><rect x="399.3" y="260.6" width="5.9" height="1.6" fill="#f4f4f4" opacity="0.62"/><rect x="403.3" y="261.6" width="1.5" height="4.7" fill="#f4f4f4" opacity="0.72"/><rect x="389.9" y="264.9" width="2.1" height="1.4" fill="#22e83a" opacity="0.85"/><rect x="396.8" y="255.5" width="1.1" height="3.3" fill="#f4f4f4" opacity="0.84"/><rect x="392.1" y="250.8" width="2.6" height="1.2" fill="#f4f4f4" opacity="0.83"/><rect x="395.8" y="259.8" width="4.9" height="1" fill="#22e83a" opacity="0.92"/><rect x="394.4" y="254.7" width="1.6" height="1" fill="#f4f4f4" opacity="0.85"/><rect x="396.4" y="247.6" width="0.9" height="4.4" fill="#22e83a" opacity="0.71"/><rect x="386.6" y="263.1" width="2.3" height="1.3" fill="#f4f4f4" opacity="0.83"/><rect x="403.9" y="257.3" width="0.9" height="2.8" fill="#22e83a" opacity="0.71"/><rect x="388.3" y="260.8" width="2.9" height="1.1" fill="#f4f4f4" opacity="0.92"/><rect x="400.2" y="265.7" width="1.4" height="2.3" fill="#f4f4f4" opacity="0.92"/><rect x="388.2" y="254.8" width="3.6" height="1.1" fill="#f4f4f4" opacity="0.97"/><rect x="387.7" y="247.3" width="1.1" height="4.4" fill="#f4f4f4" opacity="0.68"/><rect x="409.5" y="267.4" width="1.5" height="0.8" fill="#f4f4f4" opacity="0.71"/><rect x="408.1" y="263.4" width="1.4" height="4.6" fill="#f4f4f4" opacity="0.91"/><rect x="406.1" y="255.5" width="1.3" height="4" fill="#f4f4f4" opacity="0.83"/><rect x="390.2" y="266.7" width="1.3" height="1.3" fill="#f4f4f4" opacity="0.87"/><rect x="393.3" y="252.3" width="1.9" height="1.5" fill="#f4f4f4" opacity="1.0"/><rect x="393.9" y="255.5" width="1.4" height="2.8" fill="#22e83a" opacity="0.98"/><rect x="395.7" y="263.6" width="1.2" height="3.8" fill="#22e83a" opacity="0.62"/><rect x="391.3" y="253.2" width="3.7" height="1.4" fill="#f4f4f4" opacity="0.8"/><rect x="400.6" y="256.9" width="5.3" height="1" fill="#22e83a" opacity="0.76"/><rect x="403.1" y="258.6" width="1.6" height="4.9" fill="#f4f4f4" opacity="0.91"/><rect x="386.4" y="266.9" width="5.9" height="1.1" fill="#22e83a" opacity="0.96"/><rect x="390" y="263.6" width="1.5" height="4.2" fill="#f4f4f4" opacity="0.98"/><rect x="396.5" y="254.4" width="5.8" height="1.5" fill="#f4f4f4" opacity="0.96"/><rect x="399.5" y="257.7" width="5.7" height="1.3" fill="#f4f4f4" opacity="0.92"/><rect x="398.6" y="262.5" width="1" height="4.4" fill="#f4f4f4" opacity="0.63"/><rect x="406.9" y="252.6" width="1.6" height="2.1" fill="#f4f4f4" opacity="0.99"/><rect x="389.8" y="254.4" width="1" height="1.8" fill="#f4f4f4" opacity="0.88"/><rect x="388.9" y="254.4" width="5.9" height="1.2" fill="#f4f4f4" opacity="0.98"/><rect x="389.8" y="253.3" width="1" height="3.1" fill="#f4f4f4" opacity="0.82"/><rect x="392.5" y="251.6" width="5.3" height="1.2" fill="#f4f4f4" opacity="0.78"/><rect x="409.7" y="263.4" width="1" height="1.8" fill="#22e83a" opacity="0.78"/><rect x="393.5" y="257" width="1.5" height="4.7" fill="#f4f4f4" opacity="0.69"/><rect x="395" y="249.3" width="5.4" height="1.6" fill="#f4f4f4" opacity="0.69"/><rect x="386.2" y="260.4" width="1.4" height="3.8" fill="#22e83a" opacity="0.84"/><rect x="410" y="259.5" width="2" height="1.3" fill="#22e83a" opacity="0.66"/><rect x="402.6" y="258.6" width="3.5" height="1.1" fill="#f4f4f4" opacity="0.76"/><rect x="407.8" y="267.2" width="3.4" height="0.8" fill="#f4f4f4" opacity="0.71"/><rect x="386.9" y="262.8" width="3.1" height="1.5" fill="#f4f4f4" opacity="0.84"/><rect x="390.4" y="263.4" width="1.2" height="1.7" fill="#22e83a" opacity="0.79"/><rect x="400.1" y="256.9" width="2.3" height="1.3" fill="#f4f4f4" opacity="0.66"/><rect x="397.2" y="249.4" width="0.9" height="2.2" fill="#f4f4f4" opacity="0.72"/><rect x="387.5" y="254.5" width="1.3" height="5" fill="#22e83a" opacity="0.98"/><rect x="407.5" y="253.8" width="1.6" height="2.2" fill="#f4f4f4" opacity="0.6"/><rect x="400.2" y="247.3" width="1.2" height="1.5" fill="#f4f4f4" opacity="0.88"/><rect x="404.8" y="260.4" width="3.3" height="1.3" fill="#f4f4f4" opacity="0.64"/><rect x="402.3" y="249.8" width="1.4" height="2.1" fill="#f4f4f4" opacity="0.88"/><rect x="410.5" y="267.7" width="1.5" height="0.8" fill="#f4f4f4" opacity="0.99"/><rect x="386.8" y="247.4" width="4" height="1.1" fill="#f4f4f4" opacity="0.92"/><rect x="387.4" y="250.9" width="1" height="4.8" fill="#f4f4f4" opacity="0.78"/><rect x="388" y="250" width="9" height="8" fill="none" stroke="#f4f4f4" stroke-width="1.2"/><rect x="399" y="252" width="8" height="10" fill="none" stroke="#f4f4f4" stroke-width="1.2"/><rect x="401" y="247" width="4" height="2" fill="#f0e020"/><rect x="401" y="238.5" width="4" height="2" fill="#f0e020"/><rect x="428.2" y="315.9" width="4.2" height="1.4" fill="#f4f4f4" opacity="0.86"/><rect x="411.1" y="285.1" width="1.2" height="4.5" fill="#22e83a" opacity="0.92"/><rect x="433.1" y="311" width="5" height="0.9" fill="#c8c8c8" opacity="0.93"/><rect x="442.8" y="290" width="1.5" height="3.9" fill="#c8c8c8" opacity="0.73"/><rect x="411.6" y="312.3" width="1.8" height="1.6" fill="#f4f4f4" opacity="0.79"/><rect x="447.8" y="289.6" width="0.8" height="1.6" fill="#22e83a" opacity="0.75"/><rect x="408.6" y="313.7" width="3.2" height="1.3" fill="#f4f4f4" opacity="0.6"/><rect x="423.3" y="288.6" width="1.3" height="2.8" fill="#f4f4f4" opacity="0.71"/><rect x="439.1" y="291.6" width="1.3" height="4.7" fill="#20e0e0" opacity="0.7"/><rect x="419.3" y="297.7" width="4.7" height="1.3" fill="#f4f4f4" opacity="0.71"/><rect x="406.9" y="313.8" width="4.1" height="1.2" fill="#f4f4f4" opacity="0.62"/><rect x="414.7" y="294.2" width="1.5" height="1.6" fill="#c8c8c8" opacity="0.83"/><rect x="435" y="299.9" width="1.6" height="4.4" fill="#c8c8c8" opacity="0.67"/><rect x="447.8" y="322" width="0.8" height="1.5" fill="#c8c8c8" opacity="0.81"/><rect x="439.9" y="320.3" width="4.7" height="1" fill="#f4f4f4" opacity="0.91"/><rect x="441.3" y="310" width="3.4" height="1.3" fill="#22e83a" opacity="0.99"/><rect x="415.8" y="321.8" width="2.5" height="1.4" fill="#20e0e0" opacity="0.79"/><rect x="422.8" y="303.2" width="3.7" height="1" fill="#20e0e0" opacity="0.78"/><rect x="415.6" y="303.1" width="1.3" height="4.9" fill="#f4f4f4" opacity="0.83"/><rect x="428.1" y="286.1" width="1" height="4.9" fill="#f4f4f4" opacity="0.69"/><rect x="419.5" y="290.8" width="2.7" height="1.3" fill="#f4f4f4" opacity="0.81"/><rect x="428.2" y="291.6" width="1.3" height="2.1" fill="#20e0e0" opacity="0.79"/><rect x="442" y="289.4" width="1.5" height="1.1" fill="#20e0e0" opacity="1.0"/><rect x="440.8" y="302.5" width="2.4" height="1.3" fill="#f4f4f4" opacity="0.88"/><rect x="407.6" y="302.6" width="1.6" height="1.8" fill="#f4f4f4" opacity="0.96"/><rect x="441.3" y="285" width="1.5" height="4.5" fill="#20e0e0" opacity="0.61"/><rect x="423.1" y="288.8" width="0.9" height="4.9" fill="#f4f4f4" opacity="0.7"/><rect x="421.3" y="321.1" width="1.6" height="2.4" fill="#20e0e0" opacity="0.6"/><rect x="437.6" y="297.4" width="0.9" height="4.1" fill="#c8c8c8" opacity="0.71"/><rect x="419.8" y="297.2" width="1.5" height="4.4" fill="#20e0e0" opacity="0.78"/><rect x="417.1" y="286.9" width="2.2" height="1.2" fill="#22e83a" opacity="0.69"/><rect x="447.4" y="315.1" width="0.8" height="3" fill="#f4f4f4" opacity="0.96"/><rect x="438.9" y="307.9" width="1" height="3.6" fill="#f4f4f4" opacity="0.97"/><rect x="427" y="318.5" width="1.2" height="3.7" fill="#f4f4f4" opacity="0.67"/><rect x="436" y="314.7" width="1.3" height="3.1" fill="#22e83a" opacity="0.8"/><rect x="411.8" y="321.1" width="2.2" height="0.9" fill="#22e83a" opacity="0.65"/><rect x="426.9" y="301" width="2.1" height="1.6" fill="#20e0e0" opacity="0.63"/><rect x="420.6" y="314.2" width="2" height="1.1" fill="#f4f4f4" opacity="0.75"/><rect x="420" y="306.7" width="1.9" height="1.5" fill="#c8c8c8" opacity="0.96"/><rect x="433.6" y="314.6" width="2.2" height="1.5" fill="#f4f4f4" opacity="0.94"/><rect x="424.6" y="294.7" width="4.9" height="1.4" fill="#f4f4f4" opacity="0.95"/><rect x="407" y="318.3" width="3.9" height="1.2" fill="#20e0e0" opacity="0.77"/><rect x="417.3" y="296" width="1" height="2.2" fill="#f4f4f4" opacity="0.75"/><rect x="442.8" y="321.2" width="1.5" height="1.7" fill="#f4f4f4" opacity="0.86"/><rect x="421.2" y="303.8" width="1.2" height="3" fill="#f4f4f4" opacity="0.86"/><rect x="411.9" y="318.7" width="2.9" height="1.2" fill="#22e83a" opacity="0.94"/><rect x="435.2" y="293.4" width="1.5" height="3.2" fill="#22e83a" opacity="0.79"/><rect x="423.4" y="322.6" width="5" height="0.9" fill="#22e83a" opacity="0.71"/><rect x="411.9" y="290.2" width="1.9" height="1.2" fill="#f4f4f4" opacity="0.64"/><rect x="418.8" y="308.2" width="1.4" height="3.3" fill="#f4f4f4" opacity="0.92"/><rect x="407.9" y="309.6" width="1.3" height="4.7" fill="#c8c8c8" opacity="0.88"/><rect x="417.9" y="308.3" width="1.4" height="1.9" fill="#22e83a" opacity="0.75"/><rect x="426.4" y="297" width="2.3" height="1.3" fill="#22e83a" opacity="0.92"/><rect x="421" y="315.1" width="3.5" height="1" fill="#22e83a" opacity="0.89"/><rect x="445.5" y="310.7" width="2.2" height="1.5" fill="#22e83a" opacity="0.62"/><rect x="443.2" y="294.6" width="1.8" height="1.2" fill="#20e0e0" opacity="0.72"/><rect x="433.2" y="296" width="1.2" height="2.8" fill="#f4f4f4" opacity="0.85"/><rect x="410.8" y="296.9" width="1.5" height="1.7" fill="#f4f4f4" opacity="0.79"/><rect x="428.7" y="302.5" width="1.4" height="3.6" fill="#20e0e0" opacity="0.87"/><rect x="438.1" y="286.8" width="1.5" height="4.4" fill="#f4f4f4" opacity="0.98"/><rect x="434.7" y="318.5" width="1.8" height="1.5" fill="#c8c8c8" opacity="0.75"/><rect x="408.8" y="304.3" width="1.4" height="3.5" fill="#22e83a" opacity="0.83"/><rect x="437" y="307.8" width="2.7" height="1.1" fill="#c8c8c8" opacity="0.73"/><rect x="419.6" y="321" width="2.2" height="1.3" fill="#20e0e0" opacity="0.68"/><rect x="424.6" y="316.1" width="4.9" height="1.1" fill="#20e0e0" opacity="0.7"/><rect x="443.4" y="318.3" width="1.2" height="1.7" fill="#f4f4f4" opacity="0.82"/><rect x="445.9" y="284.6" width="1.4" height="4" fill="#c8c8c8" opacity="0.73"/><rect x="439" y="319" width="1.4" height="3.6" fill="#f4f4f4" opacity="0.93"/><rect x="430.2" y="320.5" width="4.6" height="1.2" fill="#f4f4f4" opacity="0.66"/><rect x="425" y="307.2" width="2.8" height="1.4" fill="#f4f4f4" opacity="0.64"/><rect x="414.4" y="289.6" width="1.6" height="2.6" fill="#f4f4f4" opacity="0.79"/><rect x="446.4" y="311.6" width="1.5" height="3.1" fill="#f4f4f4" opacity="0.67"/><rect x="416.8" y="293.8" width="4" height="1.1" fill="#f4f4f4" opacity="0.78"/><rect x="427.6" y="284.3" width="1.6" height="2.2" fill="#f4f4f4" opacity="0.64"/><rect x="421.3" y="312.2" width="2.6" height="1" fill="#f4f4f4" opacity="0.67"/><rect x="441.6" y="306.7" width="1.2" height="4.5" fill="#20e0e0" opacity="0.88"/><rect x="440.4" y="302.2" width="3.4" height="1.3" fill="#22e83a" opacity="0.94"/><rect x="408.9" y="287.5" width="4.2" height="1.5" fill="#20e0e0" opacity="0.86"/><rect x="413" y="295.3" width="1" height="4.1" fill="#f4f4f4" opacity="0.74"/><rect x="446.9" y="303.3" width="1.1" height="1.4" fill="#20e0e0" opacity="0.85"/><rect x="435.8" y="292.5" width="1.5" height="4.8" fill="#20e0e0" opacity="0.79"/><rect x="419.4" y="286.5" width="1" height="4.9" fill="#20e0e0" opacity="0.61"/><rect x="436.9" y="296" width="3.6" height="1.3" fill="#f4f4f4" opacity="0.97"/><rect x="410.1" y="313.8" width="3.6" height="1.1" fill="#f4f4f4" opacity="0.65"/><rect x="424.8" y="317.4" width="1.5" height="3" fill="#f4f4f4" opacity="0.91"/><rect x="433" y="288.8" width="2.1" height="1" fill="#f4f4f4" opacity="0.9"/><rect x="429.6" y="306.9" width="2.5" height="1.3" fill="#f4f4f4" opacity="0.61"/><rect x="417.2" y="308.8" width="3.5" height="1.1" fill="#22e83a" opacity="0.95"/><rect x="437.3" y="293.1" width="2.2" height="1.6" fill="#f4f4f4" opacity="0.73"/><rect x="413.3" y="291.1" width="1.5" height="4.1" fill="#f4f4f4" opacity="0.81"/><rect x="445" y="300.1" width="1" height="1.5" fill="#22e83a" opacity="0.74"/><rect x="416.9" y="290.2" width="1.6" height="4.5" fill="#f4f4f4" opacity="0.95"/><rect x="423.7" y="302.5" width="3.1" height="1.4" fill="#f4f4f4" opacity="0.88"/><rect x="434.6" y="290.3" width="1.1" height="3.1" fill="#f4f4f4" opacity="0.71"/><rect x="443.3" y="310" width="1.5" height="4.2" fill="#f4f4f4" opacity="0.69"/><rect x="411.2" y="298.1" width="5.6" height="1.3" fill="#f4f4f4" opacity="0.89"/><rect x="417.7" y="304" width="2.1" height="1.4" fill="#f4f4f4" opacity="0.82"/><rect x="436.9" y="301.7" width="2.5" height="1.6" fill="#22e83a" opacity="0.8"/><rect x="413.3" y="289.5" width="2.2" height="1.4" fill="#f4f4f4" opacity="0.84"/><rect x="423.9" y="307.1" width="1.6" height="4.5" fill="#f4f4f4" opacity="0.6"/><rect x="435.9" y="309.8" width="1.4" height="2.7" fill="#22e83a" opacity="0.72"/><rect x="415.7" y="288.1" width="1.4" height="3.3" fill="#f4f4f4" opacity="0.64"/><rect x="432.5" y="314.9" width="1" height="4.2" fill="#22e83a" opacity="0.82"/><rect x="438" y="305" width="1.2" height="1.9" fill="#f4f4f4" opacity="0.75"/><rect x="445.5" y="313.8" width="0.8" height="1.6" fill="#f4f4f4" opacity="0.63"/><rect x="427.5" y="290.2" width="1" height="3.2" fill="#22e83a" opacity="0.82"/><rect x="419.5" y="315.9" width="1.6" height="4.1" fill="#f4f4f4" opacity="0.88"/><rect x="435.7" y="300.8" width="3.8" height="1" fill="#f4f4f4" opacity="0.69"/><rect x="422.2" y="306.8" width="0.9" height="4" fill="#f4f4f4" opacity="0.62"/><rect x="412.4" y="289" width="2.6" height="1.4" fill="#f4f4f4" opacity="0.69"/><rect x="414.8" y="317.9" width="1.1" height="2.1" fill="#22e83a" opacity="0.76"/><rect x="413.4" y="309.1" width="3.6" height="1.4" fill="#f4f4f4" opacity="0.87"/><rect x="445.4" y="291.1" width="0.8" height="1.9" fill="#f4f4f4" opacity="0.68"/><rect x="429.3" y="292.5" width="2.6" height="1.5" fill="#f4f4f4" opacity="0.78"/><rect x="441" y="305.6" width="1.3" height="1.6" fill="#f4f4f4" opacity="0.64"/><rect x="437.1" y="295.6" width="2.5" height="1.2" fill="#f4f4f4" opacity="0.62"/><rect x="423.6" y="319.5" width="1.4" height="0.8" fill="#f4f4f4" opacity="0.88"/><rect x="436.3" y="313.1" width="2.8" height="1.6" fill="#f4f4f4" opacity="0.83"/><rect x="429.5" y="311.9" width="3.6" height="1.5" fill="#f4f4f4" opacity="0.81"/><rect x="412" y="304.3" width="1.8" height="1.5" fill="#f4f4f4" opacity="0.76"/><rect x="443.9" y="306.2" width="1.3" height="3" fill="#22e83a" opacity="0.83"/><rect x="428.8" y="317.9" width="1.1" height="2.1" fill="#f4f4f4" opacity="0.65"/><rect x="433.2" y="302.6" width="4.3" height="1.3" fill="#f4f4f4" opacity="0.64"/><rect x="429.4" y="304.2" width="1.5" height="4.6" fill="#f4f4f4" opacity="0.75"/><rect x="415.7" y="314.7" width="1.6" height="3.8" fill="#f4f4f4" opacity="0.6"/><rect x="439.4" y="297.6" width="1" height="1.9" fill="#f4f4f4" opacity="0.64"/><rect x="429.9" y="296.7" width="3" height="1.4" fill="#22e83a" opacity="0.94"/><rect x="428.2" y="296" width="3.4" height="1.1" fill="#f4f4f4" opacity="0.6"/><rect x="437.8" y="308.4" width="3.5" height="1.4" fill="#f4f4f4" opacity="0.82"/><rect x="414" y="318.2" width="1.5" height="1.8" fill="#f4f4f4" opacity="0.66"/><rect x="414.6" y="297.9" width="1" height="2.4" fill="#f4f4f4" opacity="0.64"/><rect x="438.1" y="316.3" width="1.4" height="3.7" fill="#f4f4f4" opacity="0.69"/><rect x="415.9" y="313.6" width="0.9" height="4.1" fill="#f4f4f4" opacity="0.73"/><rect x="443.5" y="313.7" width="2.5" height="1" fill="#f4f4f4" opacity="0.95"/><rect x="440.9" y="295.1" width="5.1" height="1.5" fill="#f4f4f4" opacity="0.69"/><rect x="433.8" y="300.8" width="1.6" height="2.5" fill="#f4f4f4" opacity="0.86"/><rect x="424.4" y="319.4" width="1.6" height="0.8" fill="#22e83a" opacity="0.7"/><rect x="430.9" y="319.5" width="3.5" height="0.8" fill="#f4f4f4" opacity="0.73"/><rect x="431.8" y="304.4" width="1" height="1.7" fill="#f4f4f4" opacity="0.77"/><rect x="428.7" y="313.8" width="1.8" height="1.4" fill="#f4f4f4" opacity="0.73"/><rect x="421.3" y="315.1" width="1.4" height="2.6" fill="#f4f4f4" opacity="0.88"/><rect x="430" y="294.1" width="1.5" height="3.7" fill="#f4f4f4" opacity="0.72"/><rect x="429.7" y="288" width="5" height="1.3" fill="#f4f4f4" opacity="0.73"/><rect x="425.9" y="309.6" width="5.6" height="1.5" fill="#22e83a" opacity="0.67"/><rect x="413.1" y="304.5" width="5.2" height="1.4" fill="#22e83a" opacity="0.87"/><rect x="418.1" y="294.4" width="5.9" height="1.3" fill="#f4f4f4" opacity="0.91"/><rect x="426.4" y="316.4" width="4.6" height="1.2" fill="#22e83a" opacity="0.7"/><rect x="433.6" y="288.2" width="1.1" height="4.3" fill="#f4f4f4" opacity="0.88"/><rect x="426.7" y="305.8" width="5.1" height="1.4" fill="#f4f4f4" opacity="1.0"/><rect x="431.4" y="318.4" width="1.4" height="1.6" fill="#f4f4f4" opacity="0.93"/><rect x="429.7" y="316.7" width="4.9" height="1.5" fill="#f4f4f4" opacity="0.71"/><rect x="438" y="303.5" width="1.8" height="1.1" fill="#f4f4f4" opacity="0.71"/><rect x="421.5" y="305.3" width="3.2" height="1" fill="#f4f4f4" opacity="0.69"/><rect x="424.9" y="298.6" width="2.4" height="1.2" fill="#f4f4f4" opacity="0.96"/><rect x="431" y="310.3" width="1.5" height="1.1" fill="#22e83a" opacity="0.9"/><rect x="440.7" y="318.5" width="1.4" height="1.5" fill="#f4f4f4" opacity="0.96"/><rect x="427.6" y="296.7" width="3" height="1.4" fill="#f4f4f4" opacity="0.76"/><rect x="415.9" y="303" width="1.3" height="4.7" fill="#f4f4f4" opacity="0.84"/><rect x="433.9" y="290.7" width="3.6" height="0.9" fill="#f4f4f4" opacity="0.75"/><rect x="417.6" y="298.5" width="5.8" height="1.2" fill="#f4f4f4" opacity="0.93"/><rect x="426.9" y="312" width="1.1" height="3.8" fill="#f4f4f4" opacity="0.91"/><rect x="433.5" y="312.1" width="1.6" height="1" fill="#f4f4f4" opacity="0.65"/><rect x="434.1" y="306" width="2.7" height="1.2" fill="#f4f4f4" opacity="0.84"/><rect x="444.7" y="311" width="1" height="1.6" fill="#f4f4f4" opacity="0.72"/><rect x="434.4" y="318.7" width="1" height="1.3" fill="#f4f4f4" opacity="0.93"/><rect x="412" y="290" width="10" height="9" fill="none" stroke="#f4f4f4" stroke-width="1.2"/><rect x="424" y="288" width="8" height="7" fill="none" stroke="#f4f4f4" stroke-width="1.1"/><rect x="437" y="296" width="8" height="12" fill="none" stroke="#e0e0e0" stroke-width="1.1"/><rect x="426.5" y="303" width="4" height="3.5" fill="#f0e020"/><rect x="432.5" y="303" width="3.5" height="3.5" fill="#f0e020"/><rect x="430" y="310" width="6" height="16" fill="none" stroke="#d0d0d0" stroke-width="1"/><rect x="474.2" y="324.6" width="3.9" height="1.3" fill="#22e83a" opacity="0.67"/><rect x="475.5" y="326.9" width="3.2" height="1.1" fill="#f4f4f4" opacity="0.87"/><rect x="481.4" y="326.7" width="2" height="1.2" fill="#f4f4f4" opacity="0.8"/><rect x="481.7" y="326.9" width="2.2" height="0.9" fill="#22e83a" opacity="0.99"/><rect x="474.6" y="325.3" width="1.3" height="2.7" fill="#22e83a" opacity="0.84"/><rect x="475.6" y="319.1" width="1.3" height="2.2" fill="#22e83a" opacity="0.92"/><rect x="481.5" y="319.9" width="2.5" height="1.3" fill="#22e83a" opacity="0.96"/><rect x="474.4" y="320.6" width="1.5" height="2.5" fill="#22e83a" opacity="0.79"/><rect x="477.9" y="322.8" width="3.1" height="1.3" fill="#22e83a" opacity="0.68"/><rect x="482.9" y="324.3" width="1" height="2.5" fill="#f4f4f4" opacity="0.95"/><rect x="477.7" y="326.2" width="1.8" height="1.4" fill="#f4f4f4" opacity="0.87"/><rect x="476.3" y="321.4" width="1.2" height="2.5" fill="#22e83a" opacity="0.95"/><rect x="482.8" y="322.2" width="1.2" height="2.8" fill="#f4f4f4" opacity="0.6"/><rect x="478.7" y="326.3" width="3" height="1.1" fill="#f4f4f4" opacity="0.9"/><rect x="492.3" y="242.3" width="2" height="1.1" fill="#20e0e0" opacity="0.81"/><rect x="490" y="239.1" width="2.3" height="1.1" fill="#f4f4f4" opacity="0.64"/><rect x="483.8" y="234.3" width="1.5" height="2.9" fill="#20e0e0" opacity="0.65"/><rect x="486.9" y="243.7" width="1.2" height="1.6" fill="#f4f4f4" opacity="0.89"/><rect x="494.1" y="235.7" width="1.3" height="2.3" fill="#20e0e0" opacity="0.66"/><rect x="491.3" y="235.9" width="1" height="1.8" fill="#20e0e0" opacity="0.68"/><rect x="479.2" y="237.4" width="0.9" height="2.2" fill="#20e0e0" opacity="0.79"/><rect x="478.9" y="237.2" width="2.6" height="1.3" fill="#20e0e0" opacity="0.67"/><rect x="476.1" y="230.6" width="1.8" height="1.4" fill="#22e83a" opacity="0.71"/><rect x="479.1" y="233.8" width="1.9" height="1.2" fill="#22e83a" opacity="0.72"/><rect x="519.5" y="282.7" width="2.5" height="1.5" fill="#f4f4f4" opacity="0.95"/><rect x="510.5" y="254.3" width="1.6" height="1" fill="#22e83a" opacity="0.79"/><rect x="510.7" y="267.7" width="2.9" height="1.1" fill="#f4f4f4" opacity="0.77"/><rect x="511.9" y="289.3" width="1.8" height="1.1" fill="#22e83a" opacity="0.68"/><rect x="497.3" y="258.9" width="1.9" height="1.3" fill="#22e83a" opacity="0.96"/><rect x="502.2" y="257.9" width="0.9" height="3.5" fill="#f4f4f4" opacity="0.85"/><rect x="502.5" y="283.2" width="1.2" height="1.9" fill="#22e83a" opacity="0.86"/><rect x="510" y="268.8" width="2.6" height="1" fill="#f4f4f4" opacity="0.65"/><rect x="516.1" y="268.6" width="2.4" height="1.3" fill="#f4f4f4" opacity="0.77"/><rect x="521.8" y="291.2" width="0.8" height="3.5" fill="#f4f4f4" opacity="0.92"/><rect x="337.6" y="302.9" width="1.6" height="1.5" fill="#22e83a" opacity="0.92"/><rect x="341.1" y="287.9" width="0.9" height="3.8" fill="#f4f4f4" opacity="0.77"/><rect x="337.4" y="307.9" width="1.2" height="4" fill="#f4f4f4" opacity="0.91"/><rect x="340.1" y="282.8" width="1.4" height="3.1" fill="#22e83a" opacity="0.98"/><rect x="336.2" y="307" width="2" height="1.2" fill="#f4f4f4" opacity="0.82"/><rect x="339.4" y="286.3" width="1.2" height="3.6" fill="#f4f4f4" opacity="0.63"/><rect x="338" y="301.6" width="1.7" height="1.5" fill="#f4f4f4" opacity="0.68"/><rect x="345.2" y="318.9" width="0.8" height="1.3" fill="#22e83a" opacity="0.73"/><rect x="391.2" y="258.4" width="0.8" height="3.3" fill="#f4f4f4" opacity="0.9"/><rect x="389.7" y="311.2" width="2.3" height="1.1" fill="#f4f4f4" opacity="0.84"/><rect x="390.7" y="302.5" width="0.9" height="3.7" fill="#22e83a" opacity="0.84"/><rect x="378.9" y="262.4" width="1.6" height="3.4" fill="#f4f4f4" opacity="0.98"/><rect x="383.8" y="303.6" width="2.9" height="1.1" fill="#22e83a" opacity="0.91"/><rect x="391.1" y="299.7" width="0.9" height="1.4" fill="#f4f4f4" opacity="0.77"/><rect x="379.5" y="320" width="1.3" height="2.8" fill="#22e83a" opacity="0.76"/><rect x="385.6" y="321.2" width="1.2" height="1.6" fill="#22e83a" opacity="0.83"/><rect x="383.7" y="289.7" width="3" height="1.1" fill="#22e83a" opacity="0.77"/><rect x="380.7" y="322.3" width="1.2" height="1.7" fill="#f4f4f4" opacity="0.96"/><rect x="474.3" y="328.6" width="2.6" height="0.8" fill="#f4f4f4" opacity="0.74"/><rect x="440.7" y="323.1" width="3.1" height="0.9" fill="#f4f4f4" opacity="0.63"/><rect x="438" y="324.4" width="1.7" height="1.4" fill="#22e83a" opacity="0.84"/><rect x="429.2" y="326" width="1.5" height="2" fill="#22e83a" opacity="0.71"/><rect x="482.7" y="325.6" width="3.2" height="1.5" fill="#22e83a" opacity="0.87"/><rect x="345.6" y="327.4" width="1.3" height="1.6" fill="#22e83a" opacity="0.63"/><rect x="390" y="325.5" width="1.1" height="1.7" fill="#22e83a" opacity="0.72"/><rect x="369.5" y="327.2" width="1.9" height="1.4" fill="#f4f4f4" opacity="0.88"/><rect x="458" y="322.9" width="1.3" height="2" fill="#f4f4f4" opacity="0.67"/><rect x="482.8" y="321.4" width="2.1" height="1.1" fill="#22e83a" opacity="0.61"/><rect x="355.6" y="326.9" width="1.6" height="1.9" fill="#f4f4f4" opacity="0.74"/><rect x="482.7" y="324" width="2.4" height="1.3" fill="#f4f4f4" opacity="0.9"/><rect x="395.6" y="323.4" width="3.4" height="1" fill="#f4f4f4" opacity="0.82"/><rect x="455.4" y="323" width="1.5" height="1.4" fill="#22e83a" opacity="0.86"/><rect x="388" y="322.3" width="4.9" height="1.5" fill="#22e83a" opacity="0.9"/><rect x="410.2" y="324.4" width="1.3" height="1.8" fill="#22e83a" opacity="0.93"/><rect x="445.7" y="277.9" width="1.8" height="1" fill="#f4f4f4" opacity="0.87"/><rect x="445.6" y="284" width="1.4" height="0.8" fill="#22e83a" opacity="0.95"/><rect x="447.9" y="250.4" width="0.8" height="2.2" fill="#f4f4f4" opacity="0.72"/><rect x="447.6" y="249.2" width="0.8" height="2" fill="#22e83a" opacity="0.72"/><rect x="444.3" y="259.9" width="1.1" height="2.8" fill="#f4f4f4" opacity="0.63"/><rect x="440.8" y="271.3" width="1.6" height="2.8" fill="#f4f4f4" opacity="0.71"/><rect x="468.3" y="322" width="2.8" height="1.3" fill="#f4f4f4" opacity="0.62"/><rect x="476.3" y="267" width="0.8" height="2.8" fill="#22e83a" opacity="0.83"/><rect x="473.2" y="262.2" width="1" height="2" fill="#22e83a" opacity="0.79"/><rect x="464.5" y="325.8" width="1.1" height="2" fill="#f4f4f4" opacity="0.87"/><rect x="471.7" y="251.9" width="1.3" height="1.7" fill="#22e83a" opacity="0.95"/><rect x="463.6" y="260.1" width="1.5" height="2.2" fill="#f4f4f4" opacity="0.92"/><rect x="471.6" y="299.6" width="2.7" height="1.1" fill="#22e83a" opacity="0.62"/><rect x="468.7" y="312.8" width="2.9" height="1.2" fill="#22e83a" opacity="0.83"/><rect x="476.3" y="314.8" width="0.8" height="1.5" fill="#f4f4f4" opacity="0.9"/><rect x="466.1" y="258.1" width="2.4" height="1.5" fill="#22e83a" opacity="0.92"/><rect x="521.6" y="232.3" width="2.2" height="6.5" fill="#f4f4f4" opacity="0.9"/><path d="M503.2 233L503.2 243" stroke="#22e83a" stroke-width="1"/><path d="M517.6 233L517.6 240" stroke="#22e83a" stroke-width="1"/><rect x="502.4" y="242" width="1.8" height="1.8" fill="#f4f4f4"/><rect x="516.8" y="239.5" width="1.8" height="1.8" fill="#f4f4f4"/><rect x="382" y="246.5" width="3" height="1.6" fill="#f0e020" opacity="0.8"/><path d="M420.8 88.7L398.4 179.9L401.2 181.8L389.8 195.6L385.8 177.2L391.8 178.2z" fill="#ee3a3c"/><path d="M627.7 318.6L555.8 292.8L553.1 295.6L540.9 283.4L558.9 282.2L559.7 286.3z" fill="#ee3a3c"/><path d="M435.8 412.3L426.7 374L422 374.7L428.3 357.5L437.8 372.4L435 373z" fill="#ee3a3c"/><path d="M216 367.4L244.6 326.3L241.2 322.6L258 315.2L253.4 332L250.4 331.3z" fill="#ee3a3c"/><circle cx="627.600" cy="132" r="30.800" stroke="#3a3a3a" stroke-width="8.500"/><rect x="613" y="116.200" width="29" height="29.600" fill="#a9a9a9"/><rect x="604" y="184.200" width="46" height="15" rx="3" fill="#6c6c7a"/><path d="M638 190h5l-2.500 3z" fill="#8d8da2"/><rect x="642.300" y="226.300" width="31.400" height="192.200" rx="3" fill="#656565"/><circle cx="668" cy="230.600" r="2.800" fill="#4a4a4a" stroke="#555" stroke-width=".6"/><g stroke="#414141" stroke-width="1.700" fill="none"><path d="M647.500 245.500h17q5 0 5 5v4q0 11.500-11 11.500t-11-11.500z"/><circle cx="658" cy="255.500" r="6"/><circle cx="658" cy="255.500" r="3" stroke-width="1.100"/><path d="M652 303q-3-4-5-5.500 1.500-2.500 4 0l2 2v-10.500q1.600-2 3.200 0v6-8.500q1.600-2 3.200 0v8.500-7q1.600-2 3.200 0v8.500-4.500q1.600-1.700 3 0v9.500q0 5.500-4.500 8.500h-8q-2-2-4.300-7z" stroke-width="1.400"/><path d="M647 317l16 14M663 317l-16 14M647 317h3M647 317v3M647 331v-3M647 331h3"/><circle cx="665" cy="333" r="3.500"/><path d="M667.500 335.500l3 3"/><ellipse cx="658" cy="366" rx="9" ry="3.500"/><rect x="655.500" y="355" width="5" height="16" rx="1"/><path d="M658 352v3M658 371v6"/><rect x="647.500" y="395.500" width="5" height="5" stroke-width="1"/><rect x="655" y="395.500" width="5" height="5" stroke-width="1"/><rect x="662.500" y="395.500" width="5" height="5" stroke-width="1"/><rect x="647.500" y="403.500" width="18" height="11" stroke-width="1.200"/></g><path d="M655.500 274h5l-2.500 3zM655.500 344h5l-2.500 3zM655.500 383h5l-2.500 3zM653 405.500v7l7-3.500z" fill="#414141"/><rect x="617" y="74" width="10.500" height="2.600" fill="#f0f0f0"/><path d="M639.500 68.500h7.500v7.500" stroke="#f0f0f0" stroke-width="1.400"/><rect x="637.800" y="70.800" width="6.500" height="6.500" stroke="#f0f0f0" stroke-width="1.700"/><path d="M657.500 69.500l8 8M665.500 69.500l-8 8" stroke="#f4f4f4" stroke-width="2.600"/><path d="M211.500 413.500V464.500H262" stroke="#f0f0f0" stroke-width="1.200"/><rect x="207.300" y="459.500" width="9.400" height="9.400" stroke="#f0f0f0" stroke-width="1.200"/><path d="M266.500 450.500l12.500 12M279 450.500l-12.500 12" stroke="#e8e8e8" stroke-width="1.100"/><path d="M213.300 397.300l6.200 5.900 6.200-5.900M219.500 403.200v6.500" stroke="#e8e8e8" stroke-width="1.100"/><path d="M651.200 58V477M199 471.300H678" stroke="#ffffff" stroke-width="1.500"/><rect x="350.500" y="417.700" width="51.500" height="14.300" fill="#323232"/><rect x="350.500" y="432.800" width="105.500" height="14.300" fill="#323232"/><rect x="293.800" y="449.300" width="260" height="25.700" rx="3" fill="#4e4e4e"/><rect x="348.500" y="450.300" width="202" height="23.700" fill="#8fa28e"/><g fill="#888"><rect x="298" y="453" width="1.300" height="1.300"/><rect x="298" y="456" width="1.300" height="1.300"/><rect x="298" y="459" width="1.300" height="1.300"/><rect x="298" y="462" width="1.300" height="1.300"/><rect x="298" y="465" width="1.300" height="1.300"/><rect x="298" y="468" width="1.300" height="1.300"/><rect x="298" y="471" width="1.300" height="1.300"/><rect x="300.5" y="453" width="1.300" height="1.300"/><rect x="300.5" y="456" width="1.300" height="1.300"/><rect x="300.5" y="459" width="1.300" height="1.300"/><rect x="300.5" y="462" width="1.300" height="1.300"/><rect x="300.5" y="465" width="1.300" height="1.300"/><rect x="300.5" y="468" width="1.300" height="1.300"/><rect x="300.5" y="471" width="1.300" height="1.300"/></g><path d="M308 458l7 7M315 458l-7 7" stroke="#e4e4e4" stroke-width="2"/><path d="M330.500 455.500a4 4 0 0 0-3.500 6.300q1.500 1.200 3.600.800l6 6.400q1.500 1.200 2.800 0 1.200-1.300 0-2.800l-6.400-6q.5-2.200-.7-3.700l-2.300 2.400-2-.600-.5-2z" fill="#dcdcdc"/><rect x="353" y="455.300" width="16" height="14" rx="1.500" fill="#bcc2bc" stroke="#505650"/><path d="M356 459l3.500 3-3.500 3M361.500 466.500h5" stroke="#222" stroke-width="1.300"/><path d="M372.500 460.500h4.500l-2.200 3z" fill="#5a665a"/></svg>
<div class="t" style="left:202px;top:65px;color:#f0f0f0;letter-spacing:.45px">[−][俯视][二维线框]</div>
<div class="t" style="left:621px;top:92px;color:#bebebe;font-size:11.500px">北</div>
<div class="t" style="left:621px;top:159px;color:#bebebe;font-size:11.500px">南</div>
<div class="t" style="left:589px;top:125px;color:#bebebe;font-size:11.500px">西</div>
<div class="t" style="left:654px;top:125px;color:#bebebe;font-size:11.500px">东</div>
<div class="t" style="left:619px;top:123px;color:#5c5c5c;font-size:17px;line-height:17px;height:17px">上</div>
<div class="t" style="left:609px;top:185px;color:#9c9cae;font-size:11px">WCS</div>
<div class="t" style="left:352.500px;top:418px;color:#606060;font-family:'Liberation Mono','Noto Sans CJK SC',monospace;font-size:12px">命令: E</div>
<div class="t" style="left:352.500px;top:434px;color:#606060;font-family:'Liberation Mono','Noto Sans CJK SC',monospace;font-size:12px">ERASE 找到 2 个</div>
<div class="t" style="left:387px;top:455px;color:#76867a;font-size:12px;letter-spacing:.5px">键入命令</div>
<div class="a" style="left:199px;top:477px;width:481px;height:16px;background:#f1f1f1"></div>
<svg class="a" style="left:199px;top:477px" width="350" height="16" viewBox="199 477 350 16"><rect x="199.5" y="477.500" width="13.800" height="13.500" fill="#f6f6f6" stroke="#cfcfcf" stroke-width="1"/><rect x="213.3" y="477.500" width="13.800" height="13.500" fill="#f6f6f6" stroke="#cfcfcf" stroke-width="1"/><rect x="227.1" y="477.500" width="13.800" height="13.500" fill="#f6f6f6" stroke="#cfcfcf" stroke-width="1"/><rect x="240.9" y="477.500" width="13.800" height="13.500" fill="#f6f6f6" stroke="#cfcfcf" stroke-width="1"/><path d="M203 480v8h1.800v-8zM210.500 480l-5 4 5 4zM223.500 480l-5 4 5 4zM231 480l5 4-5 4zM244.500 480l5 4-5 4zM249.800 480v8h1.800v-8z" fill="#6e6e6e"/><path d="M255.500 477h45.300l-5.500 14.500h-33.600z" fill="#000"/><path d="M297 491.500l4.500-13.500h45.500l-5.500 13.500z" fill="#fafafa" stroke="#666" stroke-width="1"/></svg>
<div class="t" style="left:266px;top:478px;color:#fff;font-weight:bold">模型</div>
<div class="t" style="left:306px;top:478px;color:#000">布局1</div>
<svg class="a" style="left:230px;top:493px" width="320" height="24" viewBox="230 493 320 24"><defs><linearGradient id="hb" x1="0" y1="0" x2="0" y2="1"><stop offset="0" stop-color="#d2ecf7"/><stop offset=".5" stop-color="#a9d5ea"/><stop offset="1" stop-color="#c2e2f0"/></linearGradient></defs><rect x="232.5" y="494" width="1" height="22.500" fill="#8a8a8a"/><rect x="255.5" y="494" width="1" height="22.500" fill="#8a8a8a"/><rect x="277.5" y="494" width="1" height="22.500" fill="#8a8a8a"/><rect x="300.5" y="494" width="21" height="22.500" fill="url(#hb)"/><rect x="299.5" y="494" width="1" height="22.500" fill="#8a8a8a"/><rect x="321.5" y="494" width="1" height="22.500" fill="#8a8a8a"/><rect x="344.0" y="494" width="21.0" height="22.500" fill="url(#hb)"/><rect x="343.0" y="494" width="1" height="22.500" fill="#8a8a8a"/><rect x="365.0" y="494" width="1" height="22.500" fill="#8a8a8a"/><rect x="388.0" y="494" width="21.0" height="22.500" fill="url(#hb)"/><rect x="387.0" y="494" width="1" height="22.500" fill="#8a8a8a"/><rect x="410.0" y="494" width="21.0" height="22.500" fill="url(#hb)"/><rect x="409.0" y="494" width="1" height="22.500" fill="#8a8a8a"/><rect x="432.0" y="494" width="21.19999999999999" height="22.500" fill="url(#hb)"/><rect x="431.0" y="494" width="1" height="22.500" fill="#8a8a8a"/><rect x="453.2" y="494" width="1" height="22.500" fill="#8a8a8a"/><rect x="476.0" y="494" width="21.0" height="22.500" fill="url(#hb)"/><rect x="475.0" y="494" width="1" height="22.500" fill="#8a8a8a"/><rect x="497.0" y="494" width="1" height="22.500" fill="#8a8a8a"/><rect x="519.3" y="494" width="1" height="22.500" fill="#8a8a8a"/><rect x="541.3" y="494" width="1" height="22.500" fill="#8a8a8a"/><path d="M238 502h11M243.500 496.500v11" stroke="#1c1c1c" stroke-width="1.200"/><rect x="241.500" y="500" width="4" height="4" fill="none" stroke="#1c1c1c" stroke-width=".8"/><rect x="246" y="507" width="3.500" height="3.500" fill="#fff" stroke="#c33" stroke-width=".9"/><circle cx="251.500" cy="504.500" r="1.800" fill="#fff" stroke="#c33" stroke-width=".9"/><g fill="#1c1c1c"><rect x="262" y="499" width="1.100" height="1.100"/><rect x="262" y="501" width="1.100" height="1.100"/><rect x="262" y="503" width="1.100" height="1.100"/><rect x="262" y="505" width="1.100" height="1.100"/><rect x="264" y="499" width="1.100" height="1.100"/><rect x="264" y="501" width="1.100" height="1.100"/><rect x="264" y="503" width="1.100" height="1.100"/><rect x="264" y="505" width="1.100" height="1.100"/><rect x="266" y="499" width="1.100" height="1.100"/><rect x="266" y="501" width="1.100" height="1.100"/><rect x="266" y="503" width="1.100" height="1.100"/><rect x="266" y="505" width="1.100" height="1.100"/><rect x="268" y="499" width="1.100" height="1.100"/><rect x="268" y="501" width="1.100" height="1.100"/><rect x="268" y="503" width="1.100" height="1.100"/><rect x="268" y="505" width="1.100" height="1.100"/><rect x="270" y="499" width="1.100" height="1.100"/><rect x="270" y="501" width="1.100" height="1.100"/><rect x="270" y="503" width="1.100" height="1.100"/><rect x="270" y="505" width="1.100" height="1.100"/></g><path d="M261 509h12" stroke="#1c1c1c" stroke-width="1" stroke-dasharray="1 1"/><path d="M272.500 498v9" stroke="#1c1c1c" stroke-width="1.300"/><rect x="281.500" y="497.500" width="15" height="15" fill="#fff" stroke="#1c1c1c" stroke-width="1.200"/><path d="M285.300 497v16M289 497v16M292.800 497v16M281 501.300h16M281 505h16M281 508.800h16" stroke="#1c1c1c" stroke-width="1.100"/><path d="M303.500 497v16.500h15M303.500 508h5v5.500" stroke="#1e4a6e" stroke-width="1.200" fill="none"/><path d="M337 502.500a5.300 5.300 0 1 0 1.500 5.500" fill="none" stroke="#1c1c1c" stroke-width="1.100"/><path d="M332 507h8.500M332 507l7-7.500M337.500 507v-4" stroke="#1c1c1c" stroke-width="1.100" fill="none"/><rect x="348.500" y="499.500" width="13" height="13" rx="1.500" fill="#f4f8fb" stroke="#333" stroke-width="1.200"/><circle cx="348.500" cy="499" r="2" fill="#fff" stroke="#e0501a" stroke-width="1.100"/><path d="M370.500 501.500l3-3.500h10.500v11l-3 3.500h-10.500z" fill="#eaeaea" stroke="#333" stroke-width="1.100"/><path d="M370.500 501.500h10.500v11M381 501.500l3-3.500" stroke="#333" stroke-width=".9" fill="none"/><circle cx="370.500" cy="511.500" r="2.100" fill="#fff" stroke="#e0501a" stroke-width="1.100"/><path d="M404.500 498.500l-11.500 11h13" stroke="#1c1c1c" stroke-width="1.200" fill="none"/><path d="M414.500 497.500v15h14.500M412.500 500l2-2.800 2 2.800M426.500 510.500l2.800 2-2.800 2M414.500 512.500l9-9" stroke="#1e3a4e" stroke-width="1.100" fill="none"/><path d="M426 496l-4.500 5.500h3l-2.500 5 6-6.500h-3z" fill="#f4b020" stroke="#c88010" stroke-width=".4"/><path d="M436.500 503h9M441 498.500v9" stroke="#1c1c1c" stroke-width="1.500"/><rect x="444" y="505" width="6" height="3.500" fill="#fff" stroke="#1c1c1c" stroke-width="1.100"/><path d="M457.500 504.500h13M465 497.500v13.500" stroke="#1c1c1c" stroke-width="1.800"/><rect x="478.500" y="497.500" width="15.500" height="15.500" fill="#7ab4ea" stroke="#f4fbff" stroke-width="1.400"/><rect x="480.500" y="499.500" width="11.500" height="11.500" fill="#a8d0f4" opacity=".7"/><rect x="504.500" y="500.500" width="7.500" height="9.500" fill="#fff" stroke="#1c1c1c" stroke-width="1.400"/><path d="M506 503.500h5M506 506.500h5M508.300 501v9" stroke="#1c1c1c" stroke-width=".9"/><path d="M522.500 500h6.500M525.800 496.500v7" stroke="#1c1c1c" stroke-width="1.100"/><rect x="527.500" y="502.500" width="6.500" height="6" fill="#fff" stroke="#555" stroke-width=".9"/><rect x="530" y="505.500" width="8" height="7.500" fill="#8cc860" stroke="#4a7a2a" stroke-width="1"/></svg>
<div class="t" style="left:197px;top:500px;font-size:11px;color:#111">0</div>
<div class="a" style="left:684px;top:462px;width:76px;height:19px;background:linear-gradient(90deg,#c9c9c1,#c4c4bc 60%,#d2d2ca)"></div>
<div class="a" style="left:684px;top:481px;width:76px;height:13px;background:linear-gradient(90deg,#dcdcd4,#d8d8d0 60%,#e4e4dc)"></div>
<div class="a" style="left:726px;top:498px;width:14px;height:14px;border:1px solid #555;background:linear-gradient(#444 0,#444 22%,#fafafa 23%,#e0e0e8)"></div>
<div class="a" style="left:743px;top:494px;width:1px;height:22px;background:#777"></div>
<div class="a" style="left:744px;top:494px;width:16px;height:22px;background:linear-gradient(#8a8a8a,#a0a0a0)"></div>
<svg class="a" style="left:744px;top:500px" width="16" height="16" viewBox="0 0 16 16"><g fill="#e8e8e8"><rect x="13" y="13" width="1.600" height="1.600"/><rect x="13" y="10" width="1.600" height="1.600"/><rect x="13" y="7" width="1.600" height="1.600"/><rect x="13" y="4" width="1.600" height="1.600"/><rect x="10" y="13" width="1.600" height="1.600"/><rect x="10" y="10" width="1.600" height="1.600"/><rect x="10" y="7" width="1.600" height="1.600"/><rect x="7" y="13" width="1.600" height="1.600"/><rect x="7" y="10" width="1.600" height="1.600"/><rect x="4" y="13" width="1.600" height="1.600"/></g></svg>
<div class="a" style="left:549px;top:510px;width:5px;height:4px;background:#f4f4f4;border:1px solid #444"></div>
<div class="a" style="left:545px;top:424.500px;width:180px;height:85px;background:#24365f"></div>
<svg class="a" style="left:545px;top:424px" width="180" height="86" viewBox="545 424 180 86"><path d="M561 478V456q0-5 4.500-5 3.500 0 6 1.500l17.500 10q3.500 2.500 3.500 4.500 0 2.500-3.500 4.500l-17 10q-3 1.700-5.500 1.700-3.500 0-4.500-3.500" fill="none" stroke="#cfd0d4" stroke-width="3" stroke-linecap="round"/><path d="M566.500 476V460" stroke="#cfd0d4" stroke-width="2.600" stroke-linecap="round" fill="none"/><path d="M573.500 463.500l6.500 4-6.500 4z" fill="#cfd0d4"/><rect x="582" y="464" width="1.800" height="7" fill="#cfd0d4"/></svg>
<div class="t" style="left:606px;top:447px;color:#e2e3e6;font-size:24px;font-weight:bold;line-height:26px;height:26px;letter-spacing:2.500px">溜溜自学</div>
<div class="t" style="left:607px;top:474px;color:#c4c6cc;font-size:10.500px;line-height:12px;height:12px;letter-spacing:1.350px">ZIXUE.3D66.COM</div>
<div class="a" style="left:7px;top:8px;width:1px;height:509px;background:#77746c"></div><div class="a" style="left:760px;top:32px;width:1px;height:485px;background:#8a877e"></div><div class="a" style="left:8px;top:516.500px;width:752px;height:1px;background:#8a877e"></div><div class="a" style="left:0;top:0;width:768px;height:524px;border:1px solid #6b6862;border-radius:7px;box-shadow:inset 0 0 0 1px rgba(255,255,255,.75);pointer-events:none"></div>
</body></html>
